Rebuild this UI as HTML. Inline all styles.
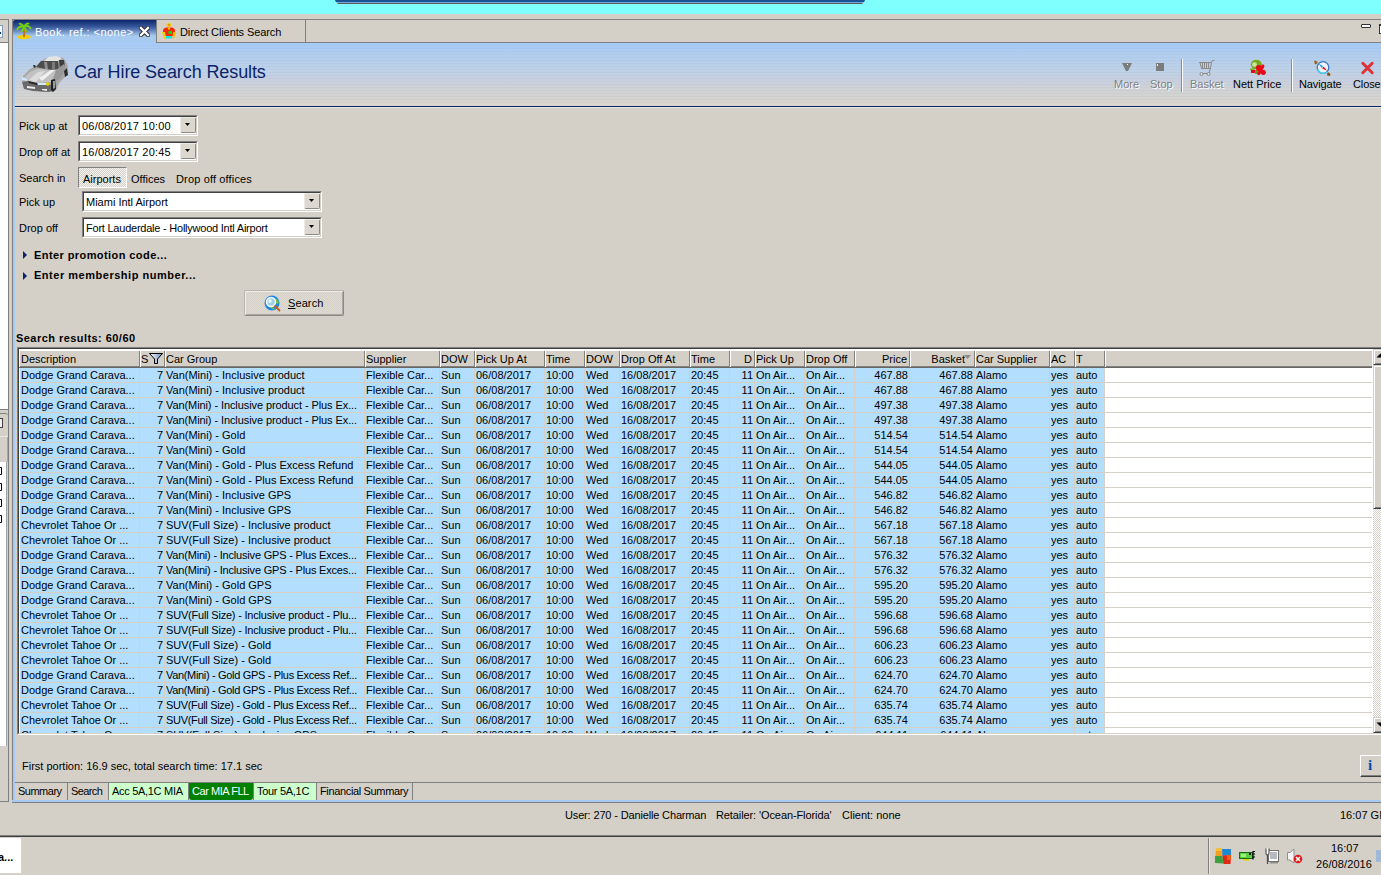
<!DOCTYPE html><html><head><meta charset="utf-8"><style>
html,body{margin:0;padding:0;}
body{width:1381px;height:875px;position:relative;overflow:hidden;background:#d4d0c8;font-family:"Liberation Sans", sans-serif;font-size:11px;color:#000;}
div{position:absolute;box-sizing:border-box;}
.t{white-space:nowrap;}
svg{position:absolute;}

</style></head><body>
<div style="left:0px;top:0px;width:1381px;height:14px;background:#80ffff"></div>
<svg style="left:333px;top:0px" width="534" height="5" viewBox="0 0 534 5"><polygon points="2,0 532,0 529,4 5,4" fill="#5a5a5a"/><polygon points="2,0 532,0 530,3 4,3" fill="#7aa6dc"/><polygon points="2,0 532,0 531,2 3,2" fill="#185496"/></svg>
<div style="left:0px;top:19px;width:9px;height:783px;background:#d4d0c8;border-top:1px solid #808080;border-right:1px solid #808080;border-bottom:1px solid #808080"></div>
<div style="left:0px;top:42px;width:8px;height:1px;background:#808080"></div>
<div style="left:0px;top:43px;width:8px;height:367px;background:#fff;border-bottom:1px solid #808080"></div>
<div style="left:0px;top:25px;width:3px;height:13px;background:#eef8ff;border:1px solid #8a9ab8;border-left:none"></div>
<div style="left:0px;top:32px;width:1px;height:2px;background:#00306a"></div>
<div style="left:0px;top:413px;width:8px;height:24px;background:#d4d0c8;border-top:1px solid #808080;border-bottom:1px solid #e8e6e2;border-top-right-radius:3px"></div>
<div style="left:0px;top:418px;width:3px;height:10px;background:#f0f0f0;border:1px solid #404040;border-left:none"></div>
<div style="left:0px;top:437px;width:8px;height:25px;background:#d4d0c8;border-right:1px solid #a8a6a0"></div>
<div style="left:0px;top:462px;width:7px;height:284px;background:#fff;border-right:1px solid #a0a0a0"></div>
<svg style="left:0px;top:467px" width="4" height="8" viewBox="0 0 4 8"><path d="M0 0.5 H1.5 V7.5 H0" stroke="#000" fill="none"/></svg>
<svg style="left:0px;top:483px" width="4" height="8" viewBox="0 0 4 8"><path d="M0 0.5 H1.5 V7.5 H0" stroke="#000" fill="none"/></svg>
<svg style="left:0px;top:499px" width="4" height="8" viewBox="0 0 4 8"><path d="M0 0.5 H1.5 V7.5 H0" stroke="#000" fill="none"/></svg>
<svg style="left:0px;top:515px" width="4" height="8" viewBox="0 0 4 8"><path d="M0 0.5 H1.5 V7.5 H0" stroke="#000" fill="none"/></svg>
<div style="left:12px;top:20px;width:1px;height:783px;background:#808080"></div>
<div style="left:13px;top:42px;width:2px;height:759px;background:#a6caf0"></div>
<div style="left:12px;top:800px;width:1369px;height:2px;background:#a6caf0"></div>
<div style="left:12px;top:802px;width:1369px;height:1px;background:#808080"></div>
<div style="left:12px;top:19px;width:1369px;height:1px;background:#808080"></div>
<div style="left:12px;top:42px;width:1369px;height:1px;background:#808080"></div>
<div style="left:13px;top:20px;width:143px;height:23px;background:linear-gradient(#0a246a 0px,#3a5a9c 7px,#a6caf0 16px,#a6caf0 23px);border-top-left-radius:2px"></div>
<svg style="left:16px;top:22px" width="16" height="18" viewBox="0 0 16 18"><ellipse cx="8" cy="15" rx="7" ry="2.2" fill="#f0d000"/><path d="M8 15 L8.5 6" stroke="#c87020" stroke-width="2"/><path d="M8 5 Q3 3 1 8 M8 5 Q12 2 15 7 M8 5 Q5 1 3 2 M8 5 Q11 0 13 2 M8 5 Q7 8 5 10 M8 5 Q10 8 11 10" stroke="#70d010" stroke-width="2" fill="none"/></svg>
<div class="t" style="left:35px;top:25px;height:14px;line-height:14px;color:#fff;letter-spacing:0.45px">Book. ref.: &lt;none&gt;</div>
<svg style="left:139px;top:26px" width="11" height="11" viewBox="0 0 11 11"><path d="M2 2 L9 9 M9 2 L2 9" stroke="#2a2a2a" stroke-width="4.4" stroke-linecap="square"/><path d="M2 2 L9 9 M9 2 L2 9" stroke="#fff" stroke-width="2.4" stroke-linecap="square"/></svg>
<div style="left:156px;top:20px;width:150px;height:22px;border-left:1px solid #808080;border-right:1px solid #808080;background:#d4d0c8"></div>
<svg style="left:158px;top:20px" width="22" height="22" viewBox="0 0 22 22"><path d="M5 11 Q5 7.5 9 7.5 L13 7.5 Q17 7.5 17 11 L17 16 L5 16 Z" fill="#f82800"/><ellipse cx="10.8" cy="5" rx="2.4" ry="2.1" fill="#f8c800"/><rect x="10" y="4.5" width="2" height="1" fill="#f06000"/><rect x="10" y="7.5" width="2" height="2" fill="#f8d000"/><path d="M4 12 L7 12 L8 18.5 L6 18.5 Z" fill="#f8d000"/><path d="M15 12 L18 12 L16 18.5 L14.5 18.5 Z" fill="#f8c000"/><rect x="10.5" y="11" width="3.5" height="3" fill="#10d810"/><rect x="8" y="16" width="6" height="2.5" fill="#08e8e8"/></svg>
<div class="t" style="left:180px;top:25px;height:14px;line-height:14px;letter-spacing:-0.1px">Direct Clients Search</div>
<div style="left:1361px;top:24px;width:10px;height:4px;border:1px solid #333;background:#fff;border-radius:1px"></div>
<div style="left:1379px;top:24px;width:9px;height:10px;border:1px solid #333;border-top-width:2px;background:#fff"></div>
<div style="left:15px;top:43px;width:1366px;height:63px;background:linear-gradient(#a6cbf7 0px,#b2cdef 12px,#bed2e8 27px,#c8d0e0 37px,#d0d2d4 47px,#d6d4d0 57px,#dcd8d2 63px)"></div>
<div style="left:15px;top:43px;width:1366px;height:63px;background:repeating-linear-gradient(rgba(255,255,255,0) 0px,rgba(255,255,255,0) 2px,rgba(0,0,0,0.025) 2px,rgba(0,0,0,0.025) 3px)"></div>
<div style="left:15px;top:106px;width:1366px;height:1px;background:#0a246a"></div>
<div style="left:15px;top:107px;width:1366px;height:1px;background:#e8e6e0"></div>
<svg style="left:18px;top:52px" width="54" height="44" viewBox="0 0 54 44"><polygon points="4,28 6,36 15,38 25,40 35,40 38,38 41,31 48,24 50,14 47,8 44,5 30,5 23,9 18,14 12,17 5,24" fill="#a8a8a8"/><polygon points="30,5 38,4 44,6 40,9 26,9" fill="#e4e4e4"/><polygon points="18,15 23,9 40,9 41,17 32,18" fill="#4c4c4c"/><polygon points="26,10 29,10 30,17 27,17" fill="#8e8e8e"/><polygon points="34,10 37,10 37,17 34,17" fill="#7a7a7a"/><polygon points="41,8 46,8 47,15 42,18" fill="#3e3e3e"/><polygon points="5,27 12,20 19,17 38,18 33,30 21,31 10,29" fill="#c2c2c2"/><polygon points="11,28 20,20 27,19 18,30" fill="#dcdcdc"/><polygon points="21,26 33,18 37,18 24,29" fill="#f0f0f0"/><polygon points="38,18 46,12 48,16 42,27 35,30" fill="#989898"/><polygon points="4,30 6,37 15,39 31,40 35,38 34,33 20,32 9,29" fill="#6a6a6a"/><polygon points="10,29 19,31 19,33 11,31" fill="#262626"/><polygon points="9,34 17,35 17,37 9,36" fill="#ececec"/><polygon points="24,37 29,37 29,39 24,38" fill="#f0f0f0"/><polygon points="20,31 28,31 28,33 20,33" fill="#d4ecff"/><circle cx="29.7" cy="32" r="1.7" fill="#e8d800"/><polygon points="4,25 9,27 9,29 4,28" fill="#d0e8ff"/><polygon points="33,28 37,27 38,37 35,40 33,38" fill="#222"/><polygon points="35,29 37,29 37,36 35,37" fill="#9a9a9a"/><polygon points="46,19 49,16 50,23 47,25" fill="#2a2a2a"/><polygon points="15,13 17,13 18,15 16,16" fill="#333"/></svg>
<div class="t" style="left:74px;top:62px;height:20px;line-height:20px;font-size:18px;color:#0a246a;letter-spacing:-0.1px">Car Hire Search Results</div>
<div class="t" style="left:1115px;top:78px;height:14px;line-height:14px;color:#fff">More</div>
<div class="t" style="left:1114px;top:77px;height:14px;line-height:14px;color:#808080">More</div>
<svg style="left:1121px;top:62px" width="12" height="11" viewBox="0 0 12 11"><polygon points="1,1 11,1 7,9 5,9" fill="#7c7c7c"/><rect x="6" y="2" width="1" height="1" fill="#fff"/></svg>
<div class="t" style="left:1151px;top:78px;height:14px;line-height:14px;color:#fff">Stop</div>
<div class="t" style="left:1150px;top:77px;height:14px;line-height:14px;color:#808080">Stop</div>
<svg style="left:1155px;top:62px" width="10" height="10" viewBox="0 0 10 10"><rect x="1" y="1" width="8" height="8" fill="#7c7c7c"/><rect x="2" y="2" width="1" height="2" fill="#fff"/></svg>
<div style="left:1181px;top:59px;width:1px;height:33px;background:#8c8c8c"></div>
<div style="left:1182px;top:59px;width:1px;height:33px;background:#fff"></div>
<div class="t" style="left:1191px;top:78px;height:14px;line-height:14px;color:#fff">Basket</div>
<div class="t" style="left:1190px;top:77px;height:14px;line-height:14px;color:#808080">Basket</div>
<svg style="left:1198px;top:59px" width="18" height="18" viewBox="0 0 18 18" fill="none" stroke="#8a8a8a" stroke-width="1"><path d="M1 3.5 L13.5 3.5 L14.5 1.5 L16.5 1.5"/><path d="M2 3.5 L3.5 9.5 L12.5 9.5 L13.5 3.5"/><path d="M4.5 4 V9 M6.5 4 V9 M8.5 4 V9 M10.5 4 V9"/><path d="M12.5 9.5 L11 14"/><path d="M4 14.5 H11"/><circle cx="3.5" cy="15" r="1.5" fill="#e6e2da"/><circle cx="10.5" cy="15" r="1.5" fill="#e6e2da"/></svg>
<div class="t" style="left:1233px;top:77px;height:14px;line-height:14px;letter-spacing:0px">Nett Price</div>
<svg style="left:1245px;top:56px" width="30" height="22" viewBox="0 0 30 22"><ellipse cx="11.3" cy="8.4" rx="5.5" ry="4.6" fill="#78a818"/><ellipse cx="9.5" cy="8.5" rx="2.5" ry="2.3" fill="#c8e4a8"/><path d="M5 13.5 Q8 13 10 12.5" stroke="#78a818" stroke-width="1.5" fill="none"/><rect x="10" y="14" width="3.5" height="4" fill="#68a020"/><rect x="6" y="14" width="4" height="3" fill="#e80818"/><circle cx="13.8" cy="12" r="2.9" fill="#e80818"/><circle cx="18.3" cy="16.3" r="2.6" fill="#e80818"/><circle cx="13.8" cy="17.6" r="1.6" fill="#e80818"/><circle cx="18" cy="10" r="1.4" fill="#e80818"/><path d="M18 10 L13.5 18" stroke="#e80818" stroke-width="3"/></svg>
<div style="left:1291px;top:59px;width:1px;height:33px;background:#8c8c8c"></div>
<div style="left:1292px;top:59px;width:1px;height:33px;background:#fff"></div>
<div class="t" style="left:1299px;top:77px;height:14px;line-height:14px;letter-spacing:-0.1px">Navigate</div>
<svg style="left:1308px;top:56px" width="30" height="24" viewBox="0 0 30 24"><circle cx="15" cy="11.5" r="5.8" fill="#eef2f6" stroke="#3a78c0" stroke-width="1.3"/><path d="M9.6 13 A5.8 5.8 0 0 0 19 16" stroke="#40d0f0" stroke-width="1.3" fill="none"/><polygon points="10.5,7.5 15,10.2 13.8,12" fill="#1890e8"/><polygon points="19,14.8 14.2,12.5 15.6,10.6" fill="#f01010"/><path d="M6.5 5 L9 7.5 M7 8 L9 5.5" stroke="#9a6020" stroke-width="1.8"/><path d="M19.5 17 L22 19.5 M19.5 19.5 L21.5 17" stroke="#8a5010" stroke-width="1.8"/></svg>
<div class="t" style="left:1353px;top:77px;height:14px;line-height:14px;letter-spacing:-0.1px">Close</div>
<svg style="left:1360px;top:61px" width="15" height="14" viewBox="0 0 15 14"><path d="M2.8 2.3 L12.2 11.7 M12.2 2.3 L2.8 11.7" stroke="#e03038" stroke-width="3" stroke-linecap="round"/></svg>
<div class="t" style="left:19px;top:119px;height:14px;line-height:14px;">Pick up at</div>
<div style="left:78px;top:115px;width:120px;height:21px;background:#fff;border-top:1px solid #808080;border-left:1px solid #808080;border-bottom:1px solid #fff;border-right:1px solid #fff"><div style="left:0;top:0;right:0;bottom:0;border-top:1px solid #404040;border-left:1px solid #404040;border-bottom:1px solid #d4d0c8;border-right:1px solid #d4d0c8"></div></div>
<div class="t" style="left:82px;top:119px;height:14px;line-height:14px;letter-spacing:0.2px">06/08/2017 10:00</div>
<div style="left:180px;top:117px;width:16px;height:16px;background:#dcd8d0;border:1px solid #9c9a94;border-radius:2px;border-top-color:#ece9e3;border-left-color:#ece9e3;border-right-color:#8c8a84;border-bottom-color:#8c8a84"></div>
<svg style="left:185px;top:123px" width="6" height="4" viewBox="0 0 6 4"><polygon points="0,0 5,0 2.5,3" fill="#000"/></svg>
<div class="t" style="left:19px;top:145px;height:14px;line-height:14px;">Drop off at</div>
<div style="left:78px;top:141px;width:120px;height:21px;background:#fff;border-top:1px solid #808080;border-left:1px solid #808080;border-bottom:1px solid #fff;border-right:1px solid #fff"><div style="left:0;top:0;right:0;bottom:0;border-top:1px solid #404040;border-left:1px solid #404040;border-bottom:1px solid #d4d0c8;border-right:1px solid #d4d0c8"></div></div>
<div class="t" style="left:82px;top:145px;height:14px;line-height:14px;letter-spacing:0.2px">16/08/2017 20:45</div>
<div style="left:180px;top:143px;width:16px;height:16px;background:#dcd8d0;border:1px solid #9c9a94;border-radius:2px;border-top-color:#ece9e3;border-left-color:#ece9e3;border-right-color:#8c8a84;border-bottom-color:#8c8a84"></div>
<svg style="left:185px;top:149px" width="6" height="4" viewBox="0 0 6 4"><polygon points="0,0 5,0 2.5,3" fill="#000"/></svg>
<div class="t" style="left:19px;top:171px;height:14px;line-height:14px;">Search in</div>
<div style="left:78px;top:167px;width:49px;height:21px;border-top:1px solid #808080;border-left:1px solid #808080;border-bottom:1px solid #fff;border-right:1px solid #fff;background-color:#e4e1dc;background-image:repeating-conic-gradient(#f4f3f0 0 25%, #d4d0c8 0 50%);background-size:2px 2px"></div>
<div class="t" style="left:83px;top:172px;height:14px;line-height:14px;">Airports</div>
<div class="t" style="left:131px;top:172px;height:14px;line-height:14px;">Offices</div>
<div class="t" style="left:176px;top:172px;height:14px;line-height:14px;letter-spacing:0.15px">Drop off offices</div>
<div class="t" style="left:19px;top:195px;height:14px;line-height:14px;">Pick up</div>
<div style="left:82px;top:191px;width:240px;height:21px;background:#fff;border-top:1px solid #808080;border-left:1px solid #808080;border-bottom:1px solid #fff;border-right:1px solid #fff"><div style="left:0;top:0;right:0;bottom:0;border-top:1px solid #404040;border-left:1px solid #404040;border-bottom:1px solid #d4d0c8;border-right:1px solid #d4d0c8"></div></div>
<div class="t" style="left:86px;top:195px;height:14px;line-height:14px;">Miami Intl Airport</div>
<div style="left:304px;top:193px;width:16px;height:16px;background:#dcd8d0;border:1px solid #9c9a94;border-radius:2px;border-top-color:#ece9e3;border-left-color:#ece9e3;border-right-color:#8c8a84;border-bottom-color:#8c8a84"></div>
<svg style="left:309px;top:199px" width="6" height="4" viewBox="0 0 6 4"><polygon points="0,0 5,0 2.5,3" fill="#000"/></svg>
<div class="t" style="left:19px;top:221px;height:14px;line-height:14px;">Drop off</div>
<div style="left:82px;top:217px;width:240px;height:21px;background:#fff;border-top:1px solid #808080;border-left:1px solid #808080;border-bottom:1px solid #fff;border-right:1px solid #fff"><div style="left:0;top:0;right:0;bottom:0;border-top:1px solid #404040;border-left:1px solid #404040;border-bottom:1px solid #d4d0c8;border-right:1px solid #d4d0c8"></div></div>
<div class="t" style="left:86px;top:221px;height:14px;line-height:14px;letter-spacing:-0.23px">Fort Lauderdale - Hollywood Intl Airport</div>
<div style="left:304px;top:219px;width:16px;height:16px;background:#dcd8d0;border:1px solid #9c9a94;border-radius:2px;border-top-color:#ece9e3;border-left-color:#ece9e3;border-right-color:#8c8a84;border-bottom-color:#8c8a84"></div>
<svg style="left:309px;top:225px" width="6" height="4" viewBox="0 0 6 4"><polygon points="0,0 5,0 2.5,3" fill="#000"/></svg>
<svg style="left:22px;top:250px" width="6" height="10" viewBox="0 0 6 10"><polygon points="1,1 5,5 1,9" fill="#0a246a"/></svg>
<div class="t" style="left:34px;top:248px;height:14px;line-height:14px;font-weight:bold;letter-spacing:0.42px">Enter promotion code...</div>
<svg style="left:22px;top:271px" width="6" height="10" viewBox="0 0 6 10"><polygon points="1,1 5,5 1,9" fill="#0a246a"/></svg>
<div class="t" style="left:34px;top:268px;height:14px;line-height:14px;font-weight:bold;letter-spacing:0.52px">Enter membership number...</div>
<div style="left:244px;top:290px;width:100px;height:26px;border:1px solid #8c8a84;border-top-color:#b8b6b0;border-left-color:#b8b6b0;border-radius:2px;background-color:#d8d4cc;background-image:repeating-conic-gradient(#e0dcd4 0 25%, #d4d0c8 0 50%);background-size:2px 2px;box-shadow:inset 1px 1px 0 #f0eee8, inset -1px -1px 0 #a8a6a0"></div>
<svg style="left:264px;top:295px" width="18" height="18" viewBox="0 0 18 18"><circle cx="8" cy="8" r="7.5" fill="#1e88e8"/><path d="M10 3 Q14 4 15 8 L12 9 Z" fill="#70c040"/><path d="M6 12 Q9 15 11 15 L9 12 Z" fill="#70c040"/><circle cx="7" cy="7" r="4.5" fill="#9fd0e8" stroke="#fff" stroke-width="1.5"/><circle cx="6" cy="6" r="1.8" fill="#e8f8ff"/><path d="M10.5 10.5 L16 16" stroke="#c06020" stroke-width="2"/></svg>
<div class="t" style="left:288px;top:296px;height:14px;line-height:14px;letter-spacing:0.1px"><u>S</u>earch</div>
<div class="t" style="left:16px;top:331px;height:14px;line-height:14px;font-weight:bold;letter-spacing:0.45px">Search results: 60/60</div>
<div style="left:17px;top:347px;width:1370px;height:388px;background:#fff;border-top:1px solid #808080;border-left:1px solid #808080;border-bottom:1px solid #fff"><div style="left:0;top:0;right:0;bottom:0;border-top:1px solid #404040;border-left:1px solid #404040;border-bottom:1px solid #d4d0c8"></div></div>
<div style="left:19px;top:349px;width:1353px;height:19px;background:#d4d0c8;border-top:2px solid #fff"></div>
<div style="left:19px;top:366px;width:1353px;height:1px;background:#808080"></div>
<div style="left:19px;top:367px;width:1353px;height:1px;background:#6a6762"></div>
<div style="left:19px;top:349px;width:1px;height:18px;background:#fff"></div>
<div style="left:139px;top:351px;width:1px;height:16px;background:#808080"></div>
<div style="left:140px;top:349px;width:1px;height:18px;background:#fff"></div>
<div style="left:164px;top:351px;width:1px;height:16px;background:#808080"></div>
<div style="left:165px;top:349px;width:1px;height:18px;background:#fff"></div>
<div style="left:364px;top:351px;width:1px;height:16px;background:#808080"></div>
<div style="left:365px;top:349px;width:1px;height:18px;background:#fff"></div>
<div style="left:439px;top:351px;width:1px;height:16px;background:#808080"></div>
<div style="left:440px;top:349px;width:1px;height:18px;background:#fff"></div>
<div style="left:474px;top:351px;width:1px;height:16px;background:#808080"></div>
<div style="left:475px;top:349px;width:1px;height:18px;background:#fff"></div>
<div style="left:544px;top:351px;width:1px;height:16px;background:#808080"></div>
<div style="left:545px;top:349px;width:1px;height:18px;background:#fff"></div>
<div style="left:584px;top:351px;width:1px;height:16px;background:#808080"></div>
<div style="left:585px;top:349px;width:1px;height:18px;background:#fff"></div>
<div style="left:619px;top:351px;width:1px;height:16px;background:#808080"></div>
<div style="left:620px;top:349px;width:1px;height:18px;background:#fff"></div>
<div style="left:689px;top:351px;width:1px;height:16px;background:#808080"></div>
<div style="left:690px;top:349px;width:1px;height:18px;background:#fff"></div>
<div style="left:729px;top:351px;width:1px;height:16px;background:#808080"></div>
<div style="left:730px;top:349px;width:1px;height:18px;background:#fff"></div>
<div style="left:754px;top:351px;width:1px;height:16px;background:#808080"></div>
<div style="left:755px;top:349px;width:1px;height:18px;background:#fff"></div>
<div style="left:804px;top:351px;width:1px;height:16px;background:#808080"></div>
<div style="left:805px;top:349px;width:1px;height:18px;background:#fff"></div>
<div style="left:854px;top:351px;width:1px;height:16px;background:#808080"></div>
<div style="left:855px;top:349px;width:1px;height:18px;background:#fff"></div>
<div style="left:909px;top:351px;width:1px;height:16px;background:#808080"></div>
<div style="left:910px;top:349px;width:1px;height:18px;background:#fff"></div>
<div style="left:974px;top:351px;width:1px;height:16px;background:#808080"></div>
<div style="left:975px;top:349px;width:1px;height:18px;background:#fff"></div>
<div style="left:1049px;top:351px;width:1px;height:16px;background:#808080"></div>
<div style="left:1050px;top:349px;width:1px;height:18px;background:#fff"></div>
<div style="left:1074px;top:351px;width:1px;height:16px;background:#808080"></div>
<div style="left:1075px;top:349px;width:1px;height:18px;background:#fff"></div>
<div style="left:1104px;top:351px;width:1px;height:16px;background:#808080"></div>
<div style="left:1105px;top:349px;width:1px;height:18px;background:#fff"></div>
<div class="t" style="left:21px;top:352px;height:14px;line-height:14px;">Description</div>
<div class="t" style="left:141px;top:352px;height:14px;line-height:14px;">S</div>
<div class="t" style="left:166px;top:352px;height:14px;line-height:14px;">Car Group</div>
<div class="t" style="left:366px;top:352px;height:14px;line-height:14px;">Supplier</div>
<div class="t" style="left:441px;top:352px;height:14px;line-height:14px;">DOW</div>
<div class="t" style="left:476px;top:352px;height:14px;line-height:14px;">Pick Up At</div>
<div class="t" style="left:546px;top:352px;height:14px;line-height:14px;">Time</div>
<div class="t" style="left:586px;top:352px;height:14px;line-height:14px;">DOW</div>
<div class="t" style="left:621px;top:352px;height:14px;line-height:14px;">Drop Off At</div>
<div class="t" style="left:691px;top:352px;height:14px;line-height:14px;">Time</div>
<div class="t" style="left:730px;top:352px;width:22px;height:14px;line-height:14px;text-align:right">D</div>
<div class="t" style="left:756px;top:352px;height:14px;line-height:14px;">Pick Up</div>
<div class="t" style="left:806px;top:352px;height:14px;line-height:14px;">Drop Off</div>
<div class="t" style="left:855px;top:352px;width:52px;height:14px;line-height:14px;text-align:right">Price</div>
<div class="t" style="left:910px;top:352px;width:55px;height:14px;line-height:14px;text-align:right">Basket</div>
<div class="t" style="left:976px;top:352px;height:14px;line-height:14px;">Car Supplier</div>
<div class="t" style="left:1051px;top:352px;height:14px;line-height:14px;">AC</div>
<div class="t" style="left:1076px;top:352px;height:14px;line-height:14px;">T</div>
<svg style="left:149px;top:353px" width="14" height="11" viewBox="0 0 14 11"><defs><linearGradient id="fg" x1="0" x2="1"><stop offset="0" stop-color="#fff"/><stop offset="1" stop-color="#6a8ac0"/></linearGradient></defs><polygon points="0.5,0.5 13.5,0.5 8.5,6 8.5,10.5 5.5,10.5 5.5,6" fill="url(#fg)" stroke="#000" stroke-width="1"/></svg>
<svg style="left:964px;top:355px" width="8" height="5" viewBox="0 0 8 5"><polygon points="0,0 7,0 3.5,4" fill="#8a8a8a"/></svg>
<div style="left:19px;top:368px;width:1354px;height:365px;overflow:hidden">
<div style="left:0;top:0px;width:1085px;height:14px;background:#b4defe"></div>
<div style="left:0;top:14px;width:1354px;height:1px;background:#d4d0c8"></div>
<div class="t" style="left:2px;top:0px;width:117px;overflow:hidden;height:14px;line-height:14px;letter-spacing:0px">Dodge Grand Carava...</div>
<div class="t" style="left:121px;top:0px;width:23px;height:14px;line-height:14px;text-align:right">7</div>
<div class="t" style="left:147px;top:0px;width:197px;overflow:hidden;height:14px;line-height:14px;letter-spacing:0px">Van(Mini) - Inclusive product</div>
<div class="t" style="left:347px;top:0px;width:72px;overflow:hidden;height:14px;line-height:14px;letter-spacing:0px">Flexible Car...</div>
<div class="t" style="left:422px;top:0px;width:32px;overflow:hidden;height:14px;line-height:14px;letter-spacing:0px">Sun</div>
<div class="t" style="left:457px;top:0px;width:67px;overflow:hidden;height:14px;line-height:14px;letter-spacing:0px">06/08/2017</div>
<div class="t" style="left:527px;top:0px;width:37px;overflow:hidden;height:14px;line-height:14px;letter-spacing:0px">10:00</div>
<div class="t" style="left:567px;top:0px;width:32px;overflow:hidden;height:14px;line-height:14px;letter-spacing:0px">Wed</div>
<div class="t" style="left:602px;top:0px;width:67px;overflow:hidden;height:14px;line-height:14px;letter-spacing:0px">16/08/2017</div>
<div class="t" style="left:672px;top:0px;width:37px;overflow:hidden;height:14px;line-height:14px;letter-spacing:0px">20:45</div>
<div class="t" style="left:711px;top:0px;width:23px;height:14px;line-height:14px;text-align:right">11</div>
<div class="t" style="left:737px;top:0px;width:47px;overflow:hidden;height:14px;line-height:14px;letter-spacing:0px">On Air...</div>
<div class="t" style="left:787px;top:0px;width:47px;overflow:hidden;height:14px;line-height:14px;letter-spacing:0px">On Air...</div>
<div class="t" style="left:836px;top:0px;width:53px;height:14px;line-height:14px;text-align:right">467.88</div>
<div class="t" style="left:891px;top:0px;width:63px;height:14px;line-height:14px;text-align:right">467.88</div>
<div class="t" style="left:957px;top:0px;width:72px;overflow:hidden;height:14px;line-height:14px;letter-spacing:0px">Alamo</div>
<div class="t" style="left:1032px;top:0px;width:22px;overflow:hidden;height:14px;line-height:14px;letter-spacing:0px">yes</div>
<div class="t" style="left:1057px;top:0px;width:27px;overflow:hidden;height:14px;line-height:14px;letter-spacing:0px">auto</div>
<div style="left:0;top:15px;width:1085px;height:14px;background:#b4defe"></div>
<div style="left:0;top:29px;width:1354px;height:1px;background:#d4d0c8"></div>
<div class="t" style="left:2px;top:15px;width:117px;overflow:hidden;height:14px;line-height:14px;letter-spacing:0px">Dodge Grand Carava...</div>
<div class="t" style="left:121px;top:15px;width:23px;height:14px;line-height:14px;text-align:right">7</div>
<div class="t" style="left:147px;top:15px;width:197px;overflow:hidden;height:14px;line-height:14px;letter-spacing:0px">Van(Mini) - Inclusive product</div>
<div class="t" style="left:347px;top:15px;width:72px;overflow:hidden;height:14px;line-height:14px;letter-spacing:0px">Flexible Car...</div>
<div class="t" style="left:422px;top:15px;width:32px;overflow:hidden;height:14px;line-height:14px;letter-spacing:0px">Sun</div>
<div class="t" style="left:457px;top:15px;width:67px;overflow:hidden;height:14px;line-height:14px;letter-spacing:0px">06/08/2017</div>
<div class="t" style="left:527px;top:15px;width:37px;overflow:hidden;height:14px;line-height:14px;letter-spacing:0px">10:00</div>
<div class="t" style="left:567px;top:15px;width:32px;overflow:hidden;height:14px;line-height:14px;letter-spacing:0px">Wed</div>
<div class="t" style="left:602px;top:15px;width:67px;overflow:hidden;height:14px;line-height:14px;letter-spacing:0px">16/08/2017</div>
<div class="t" style="left:672px;top:15px;width:37px;overflow:hidden;height:14px;line-height:14px;letter-spacing:0px">20:45</div>
<div class="t" style="left:711px;top:15px;width:23px;height:14px;line-height:14px;text-align:right">11</div>
<div class="t" style="left:737px;top:15px;width:47px;overflow:hidden;height:14px;line-height:14px;letter-spacing:0px">On Air...</div>
<div class="t" style="left:787px;top:15px;width:47px;overflow:hidden;height:14px;line-height:14px;letter-spacing:0px">On Air...</div>
<div class="t" style="left:836px;top:15px;width:53px;height:14px;line-height:14px;text-align:right">467.88</div>
<div class="t" style="left:891px;top:15px;width:63px;height:14px;line-height:14px;text-align:right">467.88</div>
<div class="t" style="left:957px;top:15px;width:72px;overflow:hidden;height:14px;line-height:14px;letter-spacing:0px">Alamo</div>
<div class="t" style="left:1032px;top:15px;width:22px;overflow:hidden;height:14px;line-height:14px;letter-spacing:0px">yes</div>
<div class="t" style="left:1057px;top:15px;width:27px;overflow:hidden;height:14px;line-height:14px;letter-spacing:0px">auto</div>
<div style="left:0;top:30px;width:1085px;height:14px;background:#b4defe"></div>
<div style="left:0;top:44px;width:1354px;height:1px;background:#d4d0c8"></div>
<div class="t" style="left:2px;top:30px;width:117px;overflow:hidden;height:14px;line-height:14px;letter-spacing:0px">Dodge Grand Carava...</div>
<div class="t" style="left:121px;top:30px;width:23px;height:14px;line-height:14px;text-align:right">7</div>
<div class="t" style="left:147px;top:30px;width:197px;overflow:hidden;height:14px;line-height:14px;letter-spacing:-0.09px">Van(Mini) - Inclusive product - Plus Ex...</div>
<div class="t" style="left:347px;top:30px;width:72px;overflow:hidden;height:14px;line-height:14px;letter-spacing:0px">Flexible Car...</div>
<div class="t" style="left:422px;top:30px;width:32px;overflow:hidden;height:14px;line-height:14px;letter-spacing:0px">Sun</div>
<div class="t" style="left:457px;top:30px;width:67px;overflow:hidden;height:14px;line-height:14px;letter-spacing:0px">06/08/2017</div>
<div class="t" style="left:527px;top:30px;width:37px;overflow:hidden;height:14px;line-height:14px;letter-spacing:0px">10:00</div>
<div class="t" style="left:567px;top:30px;width:32px;overflow:hidden;height:14px;line-height:14px;letter-spacing:0px">Wed</div>
<div class="t" style="left:602px;top:30px;width:67px;overflow:hidden;height:14px;line-height:14px;letter-spacing:0px">16/08/2017</div>
<div class="t" style="left:672px;top:30px;width:37px;overflow:hidden;height:14px;line-height:14px;letter-spacing:0px">20:45</div>
<div class="t" style="left:711px;top:30px;width:23px;height:14px;line-height:14px;text-align:right">11</div>
<div class="t" style="left:737px;top:30px;width:47px;overflow:hidden;height:14px;line-height:14px;letter-spacing:0px">On Air...</div>
<div class="t" style="left:787px;top:30px;width:47px;overflow:hidden;height:14px;line-height:14px;letter-spacing:0px">On Air...</div>
<div class="t" style="left:836px;top:30px;width:53px;height:14px;line-height:14px;text-align:right">497.38</div>
<div class="t" style="left:891px;top:30px;width:63px;height:14px;line-height:14px;text-align:right">497.38</div>
<div class="t" style="left:957px;top:30px;width:72px;overflow:hidden;height:14px;line-height:14px;letter-spacing:0px">Alamo</div>
<div class="t" style="left:1032px;top:30px;width:22px;overflow:hidden;height:14px;line-height:14px;letter-spacing:0px">yes</div>
<div class="t" style="left:1057px;top:30px;width:27px;overflow:hidden;height:14px;line-height:14px;letter-spacing:0px">auto</div>
<div style="left:0;top:45px;width:1085px;height:14px;background:#b4defe"></div>
<div style="left:0;top:59px;width:1354px;height:1px;background:#d4d0c8"></div>
<div class="t" style="left:2px;top:45px;width:117px;overflow:hidden;height:14px;line-height:14px;letter-spacing:0px">Dodge Grand Carava...</div>
<div class="t" style="left:121px;top:45px;width:23px;height:14px;line-height:14px;text-align:right">7</div>
<div class="t" style="left:147px;top:45px;width:197px;overflow:hidden;height:14px;line-height:14px;letter-spacing:-0.09px">Van(Mini) - Inclusive product - Plus Ex...</div>
<div class="t" style="left:347px;top:45px;width:72px;overflow:hidden;height:14px;line-height:14px;letter-spacing:0px">Flexible Car...</div>
<div class="t" style="left:422px;top:45px;width:32px;overflow:hidden;height:14px;line-height:14px;letter-spacing:0px">Sun</div>
<div class="t" style="left:457px;top:45px;width:67px;overflow:hidden;height:14px;line-height:14px;letter-spacing:0px">06/08/2017</div>
<div class="t" style="left:527px;top:45px;width:37px;overflow:hidden;height:14px;line-height:14px;letter-spacing:0px">10:00</div>
<div class="t" style="left:567px;top:45px;width:32px;overflow:hidden;height:14px;line-height:14px;letter-spacing:0px">Wed</div>
<div class="t" style="left:602px;top:45px;width:67px;overflow:hidden;height:14px;line-height:14px;letter-spacing:0px">16/08/2017</div>
<div class="t" style="left:672px;top:45px;width:37px;overflow:hidden;height:14px;line-height:14px;letter-spacing:0px">20:45</div>
<div class="t" style="left:711px;top:45px;width:23px;height:14px;line-height:14px;text-align:right">11</div>
<div class="t" style="left:737px;top:45px;width:47px;overflow:hidden;height:14px;line-height:14px;letter-spacing:0px">On Air...</div>
<div class="t" style="left:787px;top:45px;width:47px;overflow:hidden;height:14px;line-height:14px;letter-spacing:0px">On Air...</div>
<div class="t" style="left:836px;top:45px;width:53px;height:14px;line-height:14px;text-align:right">497.38</div>
<div class="t" style="left:891px;top:45px;width:63px;height:14px;line-height:14px;text-align:right">497.38</div>
<div class="t" style="left:957px;top:45px;width:72px;overflow:hidden;height:14px;line-height:14px;letter-spacing:0px">Alamo</div>
<div class="t" style="left:1032px;top:45px;width:22px;overflow:hidden;height:14px;line-height:14px;letter-spacing:0px">yes</div>
<div class="t" style="left:1057px;top:45px;width:27px;overflow:hidden;height:14px;line-height:14px;letter-spacing:0px">auto</div>
<div style="left:0;top:60px;width:1085px;height:14px;background:#b4defe"></div>
<div style="left:0;top:74px;width:1354px;height:1px;background:#d4d0c8"></div>
<div class="t" style="left:2px;top:60px;width:117px;overflow:hidden;height:14px;line-height:14px;letter-spacing:0px">Dodge Grand Carava...</div>
<div class="t" style="left:121px;top:60px;width:23px;height:14px;line-height:14px;text-align:right">7</div>
<div class="t" style="left:147px;top:60px;width:197px;overflow:hidden;height:14px;line-height:14px;letter-spacing:0px">Van(Mini) - Gold</div>
<div class="t" style="left:347px;top:60px;width:72px;overflow:hidden;height:14px;line-height:14px;letter-spacing:0px">Flexible Car...</div>
<div class="t" style="left:422px;top:60px;width:32px;overflow:hidden;height:14px;line-height:14px;letter-spacing:0px">Sun</div>
<div class="t" style="left:457px;top:60px;width:67px;overflow:hidden;height:14px;line-height:14px;letter-spacing:0px">06/08/2017</div>
<div class="t" style="left:527px;top:60px;width:37px;overflow:hidden;height:14px;line-height:14px;letter-spacing:0px">10:00</div>
<div class="t" style="left:567px;top:60px;width:32px;overflow:hidden;height:14px;line-height:14px;letter-spacing:0px">Wed</div>
<div class="t" style="left:602px;top:60px;width:67px;overflow:hidden;height:14px;line-height:14px;letter-spacing:0px">16/08/2017</div>
<div class="t" style="left:672px;top:60px;width:37px;overflow:hidden;height:14px;line-height:14px;letter-spacing:0px">20:45</div>
<div class="t" style="left:711px;top:60px;width:23px;height:14px;line-height:14px;text-align:right">11</div>
<div class="t" style="left:737px;top:60px;width:47px;overflow:hidden;height:14px;line-height:14px;letter-spacing:0px">On Air...</div>
<div class="t" style="left:787px;top:60px;width:47px;overflow:hidden;height:14px;line-height:14px;letter-spacing:0px">On Air...</div>
<div class="t" style="left:836px;top:60px;width:53px;height:14px;line-height:14px;text-align:right">514.54</div>
<div class="t" style="left:891px;top:60px;width:63px;height:14px;line-height:14px;text-align:right">514.54</div>
<div class="t" style="left:957px;top:60px;width:72px;overflow:hidden;height:14px;line-height:14px;letter-spacing:0px">Alamo</div>
<div class="t" style="left:1032px;top:60px;width:22px;overflow:hidden;height:14px;line-height:14px;letter-spacing:0px">yes</div>
<div class="t" style="left:1057px;top:60px;width:27px;overflow:hidden;height:14px;line-height:14px;letter-spacing:0px">auto</div>
<div style="left:0;top:75px;width:1085px;height:14px;background:#b4defe"></div>
<div style="left:0;top:89px;width:1354px;height:1px;background:#d4d0c8"></div>
<div class="t" style="left:2px;top:75px;width:117px;overflow:hidden;height:14px;line-height:14px;letter-spacing:0px">Dodge Grand Carava...</div>
<div class="t" style="left:121px;top:75px;width:23px;height:14px;line-height:14px;text-align:right">7</div>
<div class="t" style="left:147px;top:75px;width:197px;overflow:hidden;height:14px;line-height:14px;letter-spacing:0px">Van(Mini) - Gold</div>
<div class="t" style="left:347px;top:75px;width:72px;overflow:hidden;height:14px;line-height:14px;letter-spacing:0px">Flexible Car...</div>
<div class="t" style="left:422px;top:75px;width:32px;overflow:hidden;height:14px;line-height:14px;letter-spacing:0px">Sun</div>
<div class="t" style="left:457px;top:75px;width:67px;overflow:hidden;height:14px;line-height:14px;letter-spacing:0px">06/08/2017</div>
<div class="t" style="left:527px;top:75px;width:37px;overflow:hidden;height:14px;line-height:14px;letter-spacing:0px">10:00</div>
<div class="t" style="left:567px;top:75px;width:32px;overflow:hidden;height:14px;line-height:14px;letter-spacing:0px">Wed</div>
<div class="t" style="left:602px;top:75px;width:67px;overflow:hidden;height:14px;line-height:14px;letter-spacing:0px">16/08/2017</div>
<div class="t" style="left:672px;top:75px;width:37px;overflow:hidden;height:14px;line-height:14px;letter-spacing:0px">20:45</div>
<div class="t" style="left:711px;top:75px;width:23px;height:14px;line-height:14px;text-align:right">11</div>
<div class="t" style="left:737px;top:75px;width:47px;overflow:hidden;height:14px;line-height:14px;letter-spacing:0px">On Air...</div>
<div class="t" style="left:787px;top:75px;width:47px;overflow:hidden;height:14px;line-height:14px;letter-spacing:0px">On Air...</div>
<div class="t" style="left:836px;top:75px;width:53px;height:14px;line-height:14px;text-align:right">514.54</div>
<div class="t" style="left:891px;top:75px;width:63px;height:14px;line-height:14px;text-align:right">514.54</div>
<div class="t" style="left:957px;top:75px;width:72px;overflow:hidden;height:14px;line-height:14px;letter-spacing:0px">Alamo</div>
<div class="t" style="left:1032px;top:75px;width:22px;overflow:hidden;height:14px;line-height:14px;letter-spacing:0px">yes</div>
<div class="t" style="left:1057px;top:75px;width:27px;overflow:hidden;height:14px;line-height:14px;letter-spacing:0px">auto</div>
<div style="left:0;top:90px;width:1085px;height:14px;background:#b4defe"></div>
<div style="left:0;top:104px;width:1354px;height:1px;background:#d4d0c8"></div>
<div class="t" style="left:2px;top:90px;width:117px;overflow:hidden;height:14px;line-height:14px;letter-spacing:0px">Dodge Grand Carava...</div>
<div class="t" style="left:121px;top:90px;width:23px;height:14px;line-height:14px;text-align:right">7</div>
<div class="t" style="left:147px;top:90px;width:197px;overflow:hidden;height:14px;line-height:14px;letter-spacing:0px">Van(Mini) - Gold - Plus Excess Refund</div>
<div class="t" style="left:347px;top:90px;width:72px;overflow:hidden;height:14px;line-height:14px;letter-spacing:0px">Flexible Car...</div>
<div class="t" style="left:422px;top:90px;width:32px;overflow:hidden;height:14px;line-height:14px;letter-spacing:0px">Sun</div>
<div class="t" style="left:457px;top:90px;width:67px;overflow:hidden;height:14px;line-height:14px;letter-spacing:0px">06/08/2017</div>
<div class="t" style="left:527px;top:90px;width:37px;overflow:hidden;height:14px;line-height:14px;letter-spacing:0px">10:00</div>
<div class="t" style="left:567px;top:90px;width:32px;overflow:hidden;height:14px;line-height:14px;letter-spacing:0px">Wed</div>
<div class="t" style="left:602px;top:90px;width:67px;overflow:hidden;height:14px;line-height:14px;letter-spacing:0px">16/08/2017</div>
<div class="t" style="left:672px;top:90px;width:37px;overflow:hidden;height:14px;line-height:14px;letter-spacing:0px">20:45</div>
<div class="t" style="left:711px;top:90px;width:23px;height:14px;line-height:14px;text-align:right">11</div>
<div class="t" style="left:737px;top:90px;width:47px;overflow:hidden;height:14px;line-height:14px;letter-spacing:0px">On Air...</div>
<div class="t" style="left:787px;top:90px;width:47px;overflow:hidden;height:14px;line-height:14px;letter-spacing:0px">On Air...</div>
<div class="t" style="left:836px;top:90px;width:53px;height:14px;line-height:14px;text-align:right">544.05</div>
<div class="t" style="left:891px;top:90px;width:63px;height:14px;line-height:14px;text-align:right">544.05</div>
<div class="t" style="left:957px;top:90px;width:72px;overflow:hidden;height:14px;line-height:14px;letter-spacing:0px">Alamo</div>
<div class="t" style="left:1032px;top:90px;width:22px;overflow:hidden;height:14px;line-height:14px;letter-spacing:0px">yes</div>
<div class="t" style="left:1057px;top:90px;width:27px;overflow:hidden;height:14px;line-height:14px;letter-spacing:0px">auto</div>
<div style="left:0;top:105px;width:1085px;height:14px;background:#b4defe"></div>
<div style="left:0;top:119px;width:1354px;height:1px;background:#d4d0c8"></div>
<div class="t" style="left:2px;top:105px;width:117px;overflow:hidden;height:14px;line-height:14px;letter-spacing:0px">Dodge Grand Carava...</div>
<div class="t" style="left:121px;top:105px;width:23px;height:14px;line-height:14px;text-align:right">7</div>
<div class="t" style="left:147px;top:105px;width:197px;overflow:hidden;height:14px;line-height:14px;letter-spacing:0px">Van(Mini) - Gold - Plus Excess Refund</div>
<div class="t" style="left:347px;top:105px;width:72px;overflow:hidden;height:14px;line-height:14px;letter-spacing:0px">Flexible Car...</div>
<div class="t" style="left:422px;top:105px;width:32px;overflow:hidden;height:14px;line-height:14px;letter-spacing:0px">Sun</div>
<div class="t" style="left:457px;top:105px;width:67px;overflow:hidden;height:14px;line-height:14px;letter-spacing:0px">06/08/2017</div>
<div class="t" style="left:527px;top:105px;width:37px;overflow:hidden;height:14px;line-height:14px;letter-spacing:0px">10:00</div>
<div class="t" style="left:567px;top:105px;width:32px;overflow:hidden;height:14px;line-height:14px;letter-spacing:0px">Wed</div>
<div class="t" style="left:602px;top:105px;width:67px;overflow:hidden;height:14px;line-height:14px;letter-spacing:0px">16/08/2017</div>
<div class="t" style="left:672px;top:105px;width:37px;overflow:hidden;height:14px;line-height:14px;letter-spacing:0px">20:45</div>
<div class="t" style="left:711px;top:105px;width:23px;height:14px;line-height:14px;text-align:right">11</div>
<div class="t" style="left:737px;top:105px;width:47px;overflow:hidden;height:14px;line-height:14px;letter-spacing:0px">On Air...</div>
<div class="t" style="left:787px;top:105px;width:47px;overflow:hidden;height:14px;line-height:14px;letter-spacing:0px">On Air...</div>
<div class="t" style="left:836px;top:105px;width:53px;height:14px;line-height:14px;text-align:right">544.05</div>
<div class="t" style="left:891px;top:105px;width:63px;height:14px;line-height:14px;text-align:right">544.05</div>
<div class="t" style="left:957px;top:105px;width:72px;overflow:hidden;height:14px;line-height:14px;letter-spacing:0px">Alamo</div>
<div class="t" style="left:1032px;top:105px;width:22px;overflow:hidden;height:14px;line-height:14px;letter-spacing:0px">yes</div>
<div class="t" style="left:1057px;top:105px;width:27px;overflow:hidden;height:14px;line-height:14px;letter-spacing:0px">auto</div>
<div style="left:0;top:120px;width:1085px;height:14px;background:#b4defe"></div>
<div style="left:0;top:134px;width:1354px;height:1px;background:#d4d0c8"></div>
<div class="t" style="left:2px;top:120px;width:117px;overflow:hidden;height:14px;line-height:14px;letter-spacing:0px">Dodge Grand Carava...</div>
<div class="t" style="left:121px;top:120px;width:23px;height:14px;line-height:14px;text-align:right">7</div>
<div class="t" style="left:147px;top:120px;width:197px;overflow:hidden;height:14px;line-height:14px;letter-spacing:0px">Van(Mini) - Inclusive GPS</div>
<div class="t" style="left:347px;top:120px;width:72px;overflow:hidden;height:14px;line-height:14px;letter-spacing:0px">Flexible Car...</div>
<div class="t" style="left:422px;top:120px;width:32px;overflow:hidden;height:14px;line-height:14px;letter-spacing:0px">Sun</div>
<div class="t" style="left:457px;top:120px;width:67px;overflow:hidden;height:14px;line-height:14px;letter-spacing:0px">06/08/2017</div>
<div class="t" style="left:527px;top:120px;width:37px;overflow:hidden;height:14px;line-height:14px;letter-spacing:0px">10:00</div>
<div class="t" style="left:567px;top:120px;width:32px;overflow:hidden;height:14px;line-height:14px;letter-spacing:0px">Wed</div>
<div class="t" style="left:602px;top:120px;width:67px;overflow:hidden;height:14px;line-height:14px;letter-spacing:0px">16/08/2017</div>
<div class="t" style="left:672px;top:120px;width:37px;overflow:hidden;height:14px;line-height:14px;letter-spacing:0px">20:45</div>
<div class="t" style="left:711px;top:120px;width:23px;height:14px;line-height:14px;text-align:right">11</div>
<div class="t" style="left:737px;top:120px;width:47px;overflow:hidden;height:14px;line-height:14px;letter-spacing:0px">On Air...</div>
<div class="t" style="left:787px;top:120px;width:47px;overflow:hidden;height:14px;line-height:14px;letter-spacing:0px">On Air...</div>
<div class="t" style="left:836px;top:120px;width:53px;height:14px;line-height:14px;text-align:right">546.82</div>
<div class="t" style="left:891px;top:120px;width:63px;height:14px;line-height:14px;text-align:right">546.82</div>
<div class="t" style="left:957px;top:120px;width:72px;overflow:hidden;height:14px;line-height:14px;letter-spacing:0px">Alamo</div>
<div class="t" style="left:1032px;top:120px;width:22px;overflow:hidden;height:14px;line-height:14px;letter-spacing:0px">yes</div>
<div class="t" style="left:1057px;top:120px;width:27px;overflow:hidden;height:14px;line-height:14px;letter-spacing:0px">auto</div>
<div style="left:0;top:135px;width:1085px;height:14px;background:#b4defe"></div>
<div style="left:0;top:149px;width:1354px;height:1px;background:#d4d0c8"></div>
<div class="t" style="left:2px;top:135px;width:117px;overflow:hidden;height:14px;line-height:14px;letter-spacing:0px">Dodge Grand Carava...</div>
<div class="t" style="left:121px;top:135px;width:23px;height:14px;line-height:14px;text-align:right">7</div>
<div class="t" style="left:147px;top:135px;width:197px;overflow:hidden;height:14px;line-height:14px;letter-spacing:0px">Van(Mini) - Inclusive GPS</div>
<div class="t" style="left:347px;top:135px;width:72px;overflow:hidden;height:14px;line-height:14px;letter-spacing:0px">Flexible Car...</div>
<div class="t" style="left:422px;top:135px;width:32px;overflow:hidden;height:14px;line-height:14px;letter-spacing:0px">Sun</div>
<div class="t" style="left:457px;top:135px;width:67px;overflow:hidden;height:14px;line-height:14px;letter-spacing:0px">06/08/2017</div>
<div class="t" style="left:527px;top:135px;width:37px;overflow:hidden;height:14px;line-height:14px;letter-spacing:0px">10:00</div>
<div class="t" style="left:567px;top:135px;width:32px;overflow:hidden;height:14px;line-height:14px;letter-spacing:0px">Wed</div>
<div class="t" style="left:602px;top:135px;width:67px;overflow:hidden;height:14px;line-height:14px;letter-spacing:0px">16/08/2017</div>
<div class="t" style="left:672px;top:135px;width:37px;overflow:hidden;height:14px;line-height:14px;letter-spacing:0px">20:45</div>
<div class="t" style="left:711px;top:135px;width:23px;height:14px;line-height:14px;text-align:right">11</div>
<div class="t" style="left:737px;top:135px;width:47px;overflow:hidden;height:14px;line-height:14px;letter-spacing:0px">On Air...</div>
<div class="t" style="left:787px;top:135px;width:47px;overflow:hidden;height:14px;line-height:14px;letter-spacing:0px">On Air...</div>
<div class="t" style="left:836px;top:135px;width:53px;height:14px;line-height:14px;text-align:right">546.82</div>
<div class="t" style="left:891px;top:135px;width:63px;height:14px;line-height:14px;text-align:right">546.82</div>
<div class="t" style="left:957px;top:135px;width:72px;overflow:hidden;height:14px;line-height:14px;letter-spacing:0px">Alamo</div>
<div class="t" style="left:1032px;top:135px;width:22px;overflow:hidden;height:14px;line-height:14px;letter-spacing:0px">yes</div>
<div class="t" style="left:1057px;top:135px;width:27px;overflow:hidden;height:14px;line-height:14px;letter-spacing:0px">auto</div>
<div style="left:0;top:150px;width:1085px;height:14px;background:#b4defe"></div>
<div style="left:0;top:164px;width:1354px;height:1px;background:#d4d0c8"></div>
<div class="t" style="left:2px;top:150px;width:117px;overflow:hidden;height:14px;line-height:14px;letter-spacing:0px">Chevrolet Tahoe Or ...</div>
<div class="t" style="left:121px;top:150px;width:23px;height:14px;line-height:14px;text-align:right">7</div>
<div class="t" style="left:147px;top:150px;width:197px;overflow:hidden;height:14px;line-height:14px;letter-spacing:0px">SUV(Full Size) - Inclusive product</div>
<div class="t" style="left:347px;top:150px;width:72px;overflow:hidden;height:14px;line-height:14px;letter-spacing:0px">Flexible Car...</div>
<div class="t" style="left:422px;top:150px;width:32px;overflow:hidden;height:14px;line-height:14px;letter-spacing:0px">Sun</div>
<div class="t" style="left:457px;top:150px;width:67px;overflow:hidden;height:14px;line-height:14px;letter-spacing:0px">06/08/2017</div>
<div class="t" style="left:527px;top:150px;width:37px;overflow:hidden;height:14px;line-height:14px;letter-spacing:0px">10:00</div>
<div class="t" style="left:567px;top:150px;width:32px;overflow:hidden;height:14px;line-height:14px;letter-spacing:0px">Wed</div>
<div class="t" style="left:602px;top:150px;width:67px;overflow:hidden;height:14px;line-height:14px;letter-spacing:0px">16/08/2017</div>
<div class="t" style="left:672px;top:150px;width:37px;overflow:hidden;height:14px;line-height:14px;letter-spacing:0px">20:45</div>
<div class="t" style="left:711px;top:150px;width:23px;height:14px;line-height:14px;text-align:right">11</div>
<div class="t" style="left:737px;top:150px;width:47px;overflow:hidden;height:14px;line-height:14px;letter-spacing:0px">On Air...</div>
<div class="t" style="left:787px;top:150px;width:47px;overflow:hidden;height:14px;line-height:14px;letter-spacing:0px">On Air...</div>
<div class="t" style="left:836px;top:150px;width:53px;height:14px;line-height:14px;text-align:right">567.18</div>
<div class="t" style="left:891px;top:150px;width:63px;height:14px;line-height:14px;text-align:right">567.18</div>
<div class="t" style="left:957px;top:150px;width:72px;overflow:hidden;height:14px;line-height:14px;letter-spacing:0px">Alamo</div>
<div class="t" style="left:1032px;top:150px;width:22px;overflow:hidden;height:14px;line-height:14px;letter-spacing:0px">yes</div>
<div class="t" style="left:1057px;top:150px;width:27px;overflow:hidden;height:14px;line-height:14px;letter-spacing:0px">auto</div>
<div style="left:0;top:165px;width:1085px;height:14px;background:#b4defe"></div>
<div style="left:0;top:179px;width:1354px;height:1px;background:#d4d0c8"></div>
<div class="t" style="left:2px;top:165px;width:117px;overflow:hidden;height:14px;line-height:14px;letter-spacing:0px">Chevrolet Tahoe Or ...</div>
<div class="t" style="left:121px;top:165px;width:23px;height:14px;line-height:14px;text-align:right">7</div>
<div class="t" style="left:147px;top:165px;width:197px;overflow:hidden;height:14px;line-height:14px;letter-spacing:0px">SUV(Full Size) - Inclusive product</div>
<div class="t" style="left:347px;top:165px;width:72px;overflow:hidden;height:14px;line-height:14px;letter-spacing:0px">Flexible Car...</div>
<div class="t" style="left:422px;top:165px;width:32px;overflow:hidden;height:14px;line-height:14px;letter-spacing:0px">Sun</div>
<div class="t" style="left:457px;top:165px;width:67px;overflow:hidden;height:14px;line-height:14px;letter-spacing:0px">06/08/2017</div>
<div class="t" style="left:527px;top:165px;width:37px;overflow:hidden;height:14px;line-height:14px;letter-spacing:0px">10:00</div>
<div class="t" style="left:567px;top:165px;width:32px;overflow:hidden;height:14px;line-height:14px;letter-spacing:0px">Wed</div>
<div class="t" style="left:602px;top:165px;width:67px;overflow:hidden;height:14px;line-height:14px;letter-spacing:0px">16/08/2017</div>
<div class="t" style="left:672px;top:165px;width:37px;overflow:hidden;height:14px;line-height:14px;letter-spacing:0px">20:45</div>
<div class="t" style="left:711px;top:165px;width:23px;height:14px;line-height:14px;text-align:right">11</div>
<div class="t" style="left:737px;top:165px;width:47px;overflow:hidden;height:14px;line-height:14px;letter-spacing:0px">On Air...</div>
<div class="t" style="left:787px;top:165px;width:47px;overflow:hidden;height:14px;line-height:14px;letter-spacing:0px">On Air...</div>
<div class="t" style="left:836px;top:165px;width:53px;height:14px;line-height:14px;text-align:right">567.18</div>
<div class="t" style="left:891px;top:165px;width:63px;height:14px;line-height:14px;text-align:right">567.18</div>
<div class="t" style="left:957px;top:165px;width:72px;overflow:hidden;height:14px;line-height:14px;letter-spacing:0px">Alamo</div>
<div class="t" style="left:1032px;top:165px;width:22px;overflow:hidden;height:14px;line-height:14px;letter-spacing:0px">yes</div>
<div class="t" style="left:1057px;top:165px;width:27px;overflow:hidden;height:14px;line-height:14px;letter-spacing:0px">auto</div>
<div style="left:0;top:180px;width:1085px;height:14px;background:#b4defe"></div>
<div style="left:0;top:194px;width:1354px;height:1px;background:#d4d0c8"></div>
<div class="t" style="left:2px;top:180px;width:117px;overflow:hidden;height:14px;line-height:14px;letter-spacing:0px">Dodge Grand Carava...</div>
<div class="t" style="left:121px;top:180px;width:23px;height:14px;line-height:14px;text-align:right">7</div>
<div class="t" style="left:147px;top:180px;width:197px;overflow:hidden;height:14px;line-height:14px;letter-spacing:-0.19px">Van(Mini) - Inclusive GPS - Plus Exces...</div>
<div class="t" style="left:347px;top:180px;width:72px;overflow:hidden;height:14px;line-height:14px;letter-spacing:0px">Flexible Car...</div>
<div class="t" style="left:422px;top:180px;width:32px;overflow:hidden;height:14px;line-height:14px;letter-spacing:0px">Sun</div>
<div class="t" style="left:457px;top:180px;width:67px;overflow:hidden;height:14px;line-height:14px;letter-spacing:0px">06/08/2017</div>
<div class="t" style="left:527px;top:180px;width:37px;overflow:hidden;height:14px;line-height:14px;letter-spacing:0px">10:00</div>
<div class="t" style="left:567px;top:180px;width:32px;overflow:hidden;height:14px;line-height:14px;letter-spacing:0px">Wed</div>
<div class="t" style="left:602px;top:180px;width:67px;overflow:hidden;height:14px;line-height:14px;letter-spacing:0px">16/08/2017</div>
<div class="t" style="left:672px;top:180px;width:37px;overflow:hidden;height:14px;line-height:14px;letter-spacing:0px">20:45</div>
<div class="t" style="left:711px;top:180px;width:23px;height:14px;line-height:14px;text-align:right">11</div>
<div class="t" style="left:737px;top:180px;width:47px;overflow:hidden;height:14px;line-height:14px;letter-spacing:0px">On Air...</div>
<div class="t" style="left:787px;top:180px;width:47px;overflow:hidden;height:14px;line-height:14px;letter-spacing:0px">On Air...</div>
<div class="t" style="left:836px;top:180px;width:53px;height:14px;line-height:14px;text-align:right">576.32</div>
<div class="t" style="left:891px;top:180px;width:63px;height:14px;line-height:14px;text-align:right">576.32</div>
<div class="t" style="left:957px;top:180px;width:72px;overflow:hidden;height:14px;line-height:14px;letter-spacing:0px">Alamo</div>
<div class="t" style="left:1032px;top:180px;width:22px;overflow:hidden;height:14px;line-height:14px;letter-spacing:0px">yes</div>
<div class="t" style="left:1057px;top:180px;width:27px;overflow:hidden;height:14px;line-height:14px;letter-spacing:0px">auto</div>
<div style="left:0;top:195px;width:1085px;height:14px;background:#b4defe"></div>
<div style="left:0;top:209px;width:1354px;height:1px;background:#d4d0c8"></div>
<div class="t" style="left:2px;top:195px;width:117px;overflow:hidden;height:14px;line-height:14px;letter-spacing:0px">Dodge Grand Carava...</div>
<div class="t" style="left:121px;top:195px;width:23px;height:14px;line-height:14px;text-align:right">7</div>
<div class="t" style="left:147px;top:195px;width:197px;overflow:hidden;height:14px;line-height:14px;letter-spacing:-0.19px">Van(Mini) - Inclusive GPS - Plus Exces...</div>
<div class="t" style="left:347px;top:195px;width:72px;overflow:hidden;height:14px;line-height:14px;letter-spacing:0px">Flexible Car...</div>
<div class="t" style="left:422px;top:195px;width:32px;overflow:hidden;height:14px;line-height:14px;letter-spacing:0px">Sun</div>
<div class="t" style="left:457px;top:195px;width:67px;overflow:hidden;height:14px;line-height:14px;letter-spacing:0px">06/08/2017</div>
<div class="t" style="left:527px;top:195px;width:37px;overflow:hidden;height:14px;line-height:14px;letter-spacing:0px">10:00</div>
<div class="t" style="left:567px;top:195px;width:32px;overflow:hidden;height:14px;line-height:14px;letter-spacing:0px">Wed</div>
<div class="t" style="left:602px;top:195px;width:67px;overflow:hidden;height:14px;line-height:14px;letter-spacing:0px">16/08/2017</div>
<div class="t" style="left:672px;top:195px;width:37px;overflow:hidden;height:14px;line-height:14px;letter-spacing:0px">20:45</div>
<div class="t" style="left:711px;top:195px;width:23px;height:14px;line-height:14px;text-align:right">11</div>
<div class="t" style="left:737px;top:195px;width:47px;overflow:hidden;height:14px;line-height:14px;letter-spacing:0px">On Air...</div>
<div class="t" style="left:787px;top:195px;width:47px;overflow:hidden;height:14px;line-height:14px;letter-spacing:0px">On Air...</div>
<div class="t" style="left:836px;top:195px;width:53px;height:14px;line-height:14px;text-align:right">576.32</div>
<div class="t" style="left:891px;top:195px;width:63px;height:14px;line-height:14px;text-align:right">576.32</div>
<div class="t" style="left:957px;top:195px;width:72px;overflow:hidden;height:14px;line-height:14px;letter-spacing:0px">Alamo</div>
<div class="t" style="left:1032px;top:195px;width:22px;overflow:hidden;height:14px;line-height:14px;letter-spacing:0px">yes</div>
<div class="t" style="left:1057px;top:195px;width:27px;overflow:hidden;height:14px;line-height:14px;letter-spacing:0px">auto</div>
<div style="left:0;top:210px;width:1085px;height:14px;background:#b4defe"></div>
<div style="left:0;top:224px;width:1354px;height:1px;background:#d4d0c8"></div>
<div class="t" style="left:2px;top:210px;width:117px;overflow:hidden;height:14px;line-height:14px;letter-spacing:0px">Dodge Grand Carava...</div>
<div class="t" style="left:121px;top:210px;width:23px;height:14px;line-height:14px;text-align:right">7</div>
<div class="t" style="left:147px;top:210px;width:197px;overflow:hidden;height:14px;line-height:14px;letter-spacing:0px">Van(Mini) - Gold GPS</div>
<div class="t" style="left:347px;top:210px;width:72px;overflow:hidden;height:14px;line-height:14px;letter-spacing:0px">Flexible Car...</div>
<div class="t" style="left:422px;top:210px;width:32px;overflow:hidden;height:14px;line-height:14px;letter-spacing:0px">Sun</div>
<div class="t" style="left:457px;top:210px;width:67px;overflow:hidden;height:14px;line-height:14px;letter-spacing:0px">06/08/2017</div>
<div class="t" style="left:527px;top:210px;width:37px;overflow:hidden;height:14px;line-height:14px;letter-spacing:0px">10:00</div>
<div class="t" style="left:567px;top:210px;width:32px;overflow:hidden;height:14px;line-height:14px;letter-spacing:0px">Wed</div>
<div class="t" style="left:602px;top:210px;width:67px;overflow:hidden;height:14px;line-height:14px;letter-spacing:0px">16/08/2017</div>
<div class="t" style="left:672px;top:210px;width:37px;overflow:hidden;height:14px;line-height:14px;letter-spacing:0px">20:45</div>
<div class="t" style="left:711px;top:210px;width:23px;height:14px;line-height:14px;text-align:right">11</div>
<div class="t" style="left:737px;top:210px;width:47px;overflow:hidden;height:14px;line-height:14px;letter-spacing:0px">On Air...</div>
<div class="t" style="left:787px;top:210px;width:47px;overflow:hidden;height:14px;line-height:14px;letter-spacing:0px">On Air...</div>
<div class="t" style="left:836px;top:210px;width:53px;height:14px;line-height:14px;text-align:right">595.20</div>
<div class="t" style="left:891px;top:210px;width:63px;height:14px;line-height:14px;text-align:right">595.20</div>
<div class="t" style="left:957px;top:210px;width:72px;overflow:hidden;height:14px;line-height:14px;letter-spacing:0px">Alamo</div>
<div class="t" style="left:1032px;top:210px;width:22px;overflow:hidden;height:14px;line-height:14px;letter-spacing:0px">yes</div>
<div class="t" style="left:1057px;top:210px;width:27px;overflow:hidden;height:14px;line-height:14px;letter-spacing:0px">auto</div>
<div style="left:0;top:225px;width:1085px;height:14px;background:#b4defe"></div>
<div style="left:0;top:239px;width:1354px;height:1px;background:#d4d0c8"></div>
<div class="t" style="left:2px;top:225px;width:117px;overflow:hidden;height:14px;line-height:14px;letter-spacing:0px">Dodge Grand Carava...</div>
<div class="t" style="left:121px;top:225px;width:23px;height:14px;line-height:14px;text-align:right">7</div>
<div class="t" style="left:147px;top:225px;width:197px;overflow:hidden;height:14px;line-height:14px;letter-spacing:0px">Van(Mini) - Gold GPS</div>
<div class="t" style="left:347px;top:225px;width:72px;overflow:hidden;height:14px;line-height:14px;letter-spacing:0px">Flexible Car...</div>
<div class="t" style="left:422px;top:225px;width:32px;overflow:hidden;height:14px;line-height:14px;letter-spacing:0px">Sun</div>
<div class="t" style="left:457px;top:225px;width:67px;overflow:hidden;height:14px;line-height:14px;letter-spacing:0px">06/08/2017</div>
<div class="t" style="left:527px;top:225px;width:37px;overflow:hidden;height:14px;line-height:14px;letter-spacing:0px">10:00</div>
<div class="t" style="left:567px;top:225px;width:32px;overflow:hidden;height:14px;line-height:14px;letter-spacing:0px">Wed</div>
<div class="t" style="left:602px;top:225px;width:67px;overflow:hidden;height:14px;line-height:14px;letter-spacing:0px">16/08/2017</div>
<div class="t" style="left:672px;top:225px;width:37px;overflow:hidden;height:14px;line-height:14px;letter-spacing:0px">20:45</div>
<div class="t" style="left:711px;top:225px;width:23px;height:14px;line-height:14px;text-align:right">11</div>
<div class="t" style="left:737px;top:225px;width:47px;overflow:hidden;height:14px;line-height:14px;letter-spacing:0px">On Air...</div>
<div class="t" style="left:787px;top:225px;width:47px;overflow:hidden;height:14px;line-height:14px;letter-spacing:0px">On Air...</div>
<div class="t" style="left:836px;top:225px;width:53px;height:14px;line-height:14px;text-align:right">595.20</div>
<div class="t" style="left:891px;top:225px;width:63px;height:14px;line-height:14px;text-align:right">595.20</div>
<div class="t" style="left:957px;top:225px;width:72px;overflow:hidden;height:14px;line-height:14px;letter-spacing:0px">Alamo</div>
<div class="t" style="left:1032px;top:225px;width:22px;overflow:hidden;height:14px;line-height:14px;letter-spacing:0px">yes</div>
<div class="t" style="left:1057px;top:225px;width:27px;overflow:hidden;height:14px;line-height:14px;letter-spacing:0px">auto</div>
<div style="left:0;top:240px;width:1085px;height:14px;background:#b4defe"></div>
<div style="left:0;top:254px;width:1354px;height:1px;background:#d4d0c8"></div>
<div class="t" style="left:2px;top:240px;width:117px;overflow:hidden;height:14px;line-height:14px;letter-spacing:0px">Chevrolet Tahoe Or ...</div>
<div class="t" style="left:121px;top:240px;width:23px;height:14px;line-height:14px;text-align:right">7</div>
<div class="t" style="left:147px;top:240px;width:197px;overflow:hidden;height:14px;line-height:14px;letter-spacing:-0.2px">SUV(Full Size) - Inclusive product - Plu...</div>
<div class="t" style="left:347px;top:240px;width:72px;overflow:hidden;height:14px;line-height:14px;letter-spacing:0px">Flexible Car...</div>
<div class="t" style="left:422px;top:240px;width:32px;overflow:hidden;height:14px;line-height:14px;letter-spacing:0px">Sun</div>
<div class="t" style="left:457px;top:240px;width:67px;overflow:hidden;height:14px;line-height:14px;letter-spacing:0px">06/08/2017</div>
<div class="t" style="left:527px;top:240px;width:37px;overflow:hidden;height:14px;line-height:14px;letter-spacing:0px">10:00</div>
<div class="t" style="left:567px;top:240px;width:32px;overflow:hidden;height:14px;line-height:14px;letter-spacing:0px">Wed</div>
<div class="t" style="left:602px;top:240px;width:67px;overflow:hidden;height:14px;line-height:14px;letter-spacing:0px">16/08/2017</div>
<div class="t" style="left:672px;top:240px;width:37px;overflow:hidden;height:14px;line-height:14px;letter-spacing:0px">20:45</div>
<div class="t" style="left:711px;top:240px;width:23px;height:14px;line-height:14px;text-align:right">11</div>
<div class="t" style="left:737px;top:240px;width:47px;overflow:hidden;height:14px;line-height:14px;letter-spacing:0px">On Air...</div>
<div class="t" style="left:787px;top:240px;width:47px;overflow:hidden;height:14px;line-height:14px;letter-spacing:0px">On Air...</div>
<div class="t" style="left:836px;top:240px;width:53px;height:14px;line-height:14px;text-align:right">596.68</div>
<div class="t" style="left:891px;top:240px;width:63px;height:14px;line-height:14px;text-align:right">596.68</div>
<div class="t" style="left:957px;top:240px;width:72px;overflow:hidden;height:14px;line-height:14px;letter-spacing:0px">Alamo</div>
<div class="t" style="left:1032px;top:240px;width:22px;overflow:hidden;height:14px;line-height:14px;letter-spacing:0px">yes</div>
<div class="t" style="left:1057px;top:240px;width:27px;overflow:hidden;height:14px;line-height:14px;letter-spacing:0px">auto</div>
<div style="left:0;top:255px;width:1085px;height:14px;background:#b4defe"></div>
<div style="left:0;top:269px;width:1354px;height:1px;background:#d4d0c8"></div>
<div class="t" style="left:2px;top:255px;width:117px;overflow:hidden;height:14px;line-height:14px;letter-spacing:0px">Chevrolet Tahoe Or ...</div>
<div class="t" style="left:121px;top:255px;width:23px;height:14px;line-height:14px;text-align:right">7</div>
<div class="t" style="left:147px;top:255px;width:197px;overflow:hidden;height:14px;line-height:14px;letter-spacing:-0.2px">SUV(Full Size) - Inclusive product - Plu...</div>
<div class="t" style="left:347px;top:255px;width:72px;overflow:hidden;height:14px;line-height:14px;letter-spacing:0px">Flexible Car...</div>
<div class="t" style="left:422px;top:255px;width:32px;overflow:hidden;height:14px;line-height:14px;letter-spacing:0px">Sun</div>
<div class="t" style="left:457px;top:255px;width:67px;overflow:hidden;height:14px;line-height:14px;letter-spacing:0px">06/08/2017</div>
<div class="t" style="left:527px;top:255px;width:37px;overflow:hidden;height:14px;line-height:14px;letter-spacing:0px">10:00</div>
<div class="t" style="left:567px;top:255px;width:32px;overflow:hidden;height:14px;line-height:14px;letter-spacing:0px">Wed</div>
<div class="t" style="left:602px;top:255px;width:67px;overflow:hidden;height:14px;line-height:14px;letter-spacing:0px">16/08/2017</div>
<div class="t" style="left:672px;top:255px;width:37px;overflow:hidden;height:14px;line-height:14px;letter-spacing:0px">20:45</div>
<div class="t" style="left:711px;top:255px;width:23px;height:14px;line-height:14px;text-align:right">11</div>
<div class="t" style="left:737px;top:255px;width:47px;overflow:hidden;height:14px;line-height:14px;letter-spacing:0px">On Air...</div>
<div class="t" style="left:787px;top:255px;width:47px;overflow:hidden;height:14px;line-height:14px;letter-spacing:0px">On Air...</div>
<div class="t" style="left:836px;top:255px;width:53px;height:14px;line-height:14px;text-align:right">596.68</div>
<div class="t" style="left:891px;top:255px;width:63px;height:14px;line-height:14px;text-align:right">596.68</div>
<div class="t" style="left:957px;top:255px;width:72px;overflow:hidden;height:14px;line-height:14px;letter-spacing:0px">Alamo</div>
<div class="t" style="left:1032px;top:255px;width:22px;overflow:hidden;height:14px;line-height:14px;letter-spacing:0px">yes</div>
<div class="t" style="left:1057px;top:255px;width:27px;overflow:hidden;height:14px;line-height:14px;letter-spacing:0px">auto</div>
<div style="left:0;top:270px;width:1085px;height:14px;background:#b4defe"></div>
<div style="left:0;top:284px;width:1354px;height:1px;background:#d4d0c8"></div>
<div class="t" style="left:2px;top:270px;width:117px;overflow:hidden;height:14px;line-height:14px;letter-spacing:0px">Chevrolet Tahoe Or ...</div>
<div class="t" style="left:121px;top:270px;width:23px;height:14px;line-height:14px;text-align:right">7</div>
<div class="t" style="left:147px;top:270px;width:197px;overflow:hidden;height:14px;line-height:14px;letter-spacing:0px">SUV(Full Size) - Gold</div>
<div class="t" style="left:347px;top:270px;width:72px;overflow:hidden;height:14px;line-height:14px;letter-spacing:0px">Flexible Car...</div>
<div class="t" style="left:422px;top:270px;width:32px;overflow:hidden;height:14px;line-height:14px;letter-spacing:0px">Sun</div>
<div class="t" style="left:457px;top:270px;width:67px;overflow:hidden;height:14px;line-height:14px;letter-spacing:0px">06/08/2017</div>
<div class="t" style="left:527px;top:270px;width:37px;overflow:hidden;height:14px;line-height:14px;letter-spacing:0px">10:00</div>
<div class="t" style="left:567px;top:270px;width:32px;overflow:hidden;height:14px;line-height:14px;letter-spacing:0px">Wed</div>
<div class="t" style="left:602px;top:270px;width:67px;overflow:hidden;height:14px;line-height:14px;letter-spacing:0px">16/08/2017</div>
<div class="t" style="left:672px;top:270px;width:37px;overflow:hidden;height:14px;line-height:14px;letter-spacing:0px">20:45</div>
<div class="t" style="left:711px;top:270px;width:23px;height:14px;line-height:14px;text-align:right">11</div>
<div class="t" style="left:737px;top:270px;width:47px;overflow:hidden;height:14px;line-height:14px;letter-spacing:0px">On Air...</div>
<div class="t" style="left:787px;top:270px;width:47px;overflow:hidden;height:14px;line-height:14px;letter-spacing:0px">On Air...</div>
<div class="t" style="left:836px;top:270px;width:53px;height:14px;line-height:14px;text-align:right">606.23</div>
<div class="t" style="left:891px;top:270px;width:63px;height:14px;line-height:14px;text-align:right">606.23</div>
<div class="t" style="left:957px;top:270px;width:72px;overflow:hidden;height:14px;line-height:14px;letter-spacing:0px">Alamo</div>
<div class="t" style="left:1032px;top:270px;width:22px;overflow:hidden;height:14px;line-height:14px;letter-spacing:0px">yes</div>
<div class="t" style="left:1057px;top:270px;width:27px;overflow:hidden;height:14px;line-height:14px;letter-spacing:0px">auto</div>
<div style="left:0;top:285px;width:1085px;height:14px;background:#b4defe"></div>
<div style="left:0;top:299px;width:1354px;height:1px;background:#d4d0c8"></div>
<div class="t" style="left:2px;top:285px;width:117px;overflow:hidden;height:14px;line-height:14px;letter-spacing:0px">Chevrolet Tahoe Or ...</div>
<div class="t" style="left:121px;top:285px;width:23px;height:14px;line-height:14px;text-align:right">7</div>
<div class="t" style="left:147px;top:285px;width:197px;overflow:hidden;height:14px;line-height:14px;letter-spacing:0px">SUV(Full Size) - Gold</div>
<div class="t" style="left:347px;top:285px;width:72px;overflow:hidden;height:14px;line-height:14px;letter-spacing:0px">Flexible Car...</div>
<div class="t" style="left:422px;top:285px;width:32px;overflow:hidden;height:14px;line-height:14px;letter-spacing:0px">Sun</div>
<div class="t" style="left:457px;top:285px;width:67px;overflow:hidden;height:14px;line-height:14px;letter-spacing:0px">06/08/2017</div>
<div class="t" style="left:527px;top:285px;width:37px;overflow:hidden;height:14px;line-height:14px;letter-spacing:0px">10:00</div>
<div class="t" style="left:567px;top:285px;width:32px;overflow:hidden;height:14px;line-height:14px;letter-spacing:0px">Wed</div>
<div class="t" style="left:602px;top:285px;width:67px;overflow:hidden;height:14px;line-height:14px;letter-spacing:0px">16/08/2017</div>
<div class="t" style="left:672px;top:285px;width:37px;overflow:hidden;height:14px;line-height:14px;letter-spacing:0px">20:45</div>
<div class="t" style="left:711px;top:285px;width:23px;height:14px;line-height:14px;text-align:right">11</div>
<div class="t" style="left:737px;top:285px;width:47px;overflow:hidden;height:14px;line-height:14px;letter-spacing:0px">On Air...</div>
<div class="t" style="left:787px;top:285px;width:47px;overflow:hidden;height:14px;line-height:14px;letter-spacing:0px">On Air...</div>
<div class="t" style="left:836px;top:285px;width:53px;height:14px;line-height:14px;text-align:right">606.23</div>
<div class="t" style="left:891px;top:285px;width:63px;height:14px;line-height:14px;text-align:right">606.23</div>
<div class="t" style="left:957px;top:285px;width:72px;overflow:hidden;height:14px;line-height:14px;letter-spacing:0px">Alamo</div>
<div class="t" style="left:1032px;top:285px;width:22px;overflow:hidden;height:14px;line-height:14px;letter-spacing:0px">yes</div>
<div class="t" style="left:1057px;top:285px;width:27px;overflow:hidden;height:14px;line-height:14px;letter-spacing:0px">auto</div>
<div style="left:0;top:300px;width:1085px;height:14px;background:#b4defe"></div>
<div style="left:0;top:314px;width:1354px;height:1px;background:#d4d0c8"></div>
<div class="t" style="left:2px;top:300px;width:117px;overflow:hidden;height:14px;line-height:14px;letter-spacing:0px">Dodge Grand Carava...</div>
<div class="t" style="left:121px;top:300px;width:23px;height:14px;line-height:14px;text-align:right">7</div>
<div class="t" style="left:147px;top:300px;width:197px;overflow:hidden;height:14px;line-height:14px;letter-spacing:-0.33px">Van(Mini) - Gold GPS - Plus Excess Ref...</div>
<div class="t" style="left:347px;top:300px;width:72px;overflow:hidden;height:14px;line-height:14px;letter-spacing:0px">Flexible Car...</div>
<div class="t" style="left:422px;top:300px;width:32px;overflow:hidden;height:14px;line-height:14px;letter-spacing:0px">Sun</div>
<div class="t" style="left:457px;top:300px;width:67px;overflow:hidden;height:14px;line-height:14px;letter-spacing:0px">06/08/2017</div>
<div class="t" style="left:527px;top:300px;width:37px;overflow:hidden;height:14px;line-height:14px;letter-spacing:0px">10:00</div>
<div class="t" style="left:567px;top:300px;width:32px;overflow:hidden;height:14px;line-height:14px;letter-spacing:0px">Wed</div>
<div class="t" style="left:602px;top:300px;width:67px;overflow:hidden;height:14px;line-height:14px;letter-spacing:0px">16/08/2017</div>
<div class="t" style="left:672px;top:300px;width:37px;overflow:hidden;height:14px;line-height:14px;letter-spacing:0px">20:45</div>
<div class="t" style="left:711px;top:300px;width:23px;height:14px;line-height:14px;text-align:right">11</div>
<div class="t" style="left:737px;top:300px;width:47px;overflow:hidden;height:14px;line-height:14px;letter-spacing:0px">On Air...</div>
<div class="t" style="left:787px;top:300px;width:47px;overflow:hidden;height:14px;line-height:14px;letter-spacing:0px">On Air...</div>
<div class="t" style="left:836px;top:300px;width:53px;height:14px;line-height:14px;text-align:right">624.70</div>
<div class="t" style="left:891px;top:300px;width:63px;height:14px;line-height:14px;text-align:right">624.70</div>
<div class="t" style="left:957px;top:300px;width:72px;overflow:hidden;height:14px;line-height:14px;letter-spacing:0px">Alamo</div>
<div class="t" style="left:1032px;top:300px;width:22px;overflow:hidden;height:14px;line-height:14px;letter-spacing:0px">yes</div>
<div class="t" style="left:1057px;top:300px;width:27px;overflow:hidden;height:14px;line-height:14px;letter-spacing:0px">auto</div>
<div style="left:0;top:315px;width:1085px;height:14px;background:#b4defe"></div>
<div style="left:0;top:329px;width:1354px;height:1px;background:#d4d0c8"></div>
<div class="t" style="left:2px;top:315px;width:117px;overflow:hidden;height:14px;line-height:14px;letter-spacing:0px">Dodge Grand Carava...</div>
<div class="t" style="left:121px;top:315px;width:23px;height:14px;line-height:14px;text-align:right">7</div>
<div class="t" style="left:147px;top:315px;width:197px;overflow:hidden;height:14px;line-height:14px;letter-spacing:-0.33px">Van(Mini) - Gold GPS - Plus Excess Ref...</div>
<div class="t" style="left:347px;top:315px;width:72px;overflow:hidden;height:14px;line-height:14px;letter-spacing:0px">Flexible Car...</div>
<div class="t" style="left:422px;top:315px;width:32px;overflow:hidden;height:14px;line-height:14px;letter-spacing:0px">Sun</div>
<div class="t" style="left:457px;top:315px;width:67px;overflow:hidden;height:14px;line-height:14px;letter-spacing:0px">06/08/2017</div>
<div class="t" style="left:527px;top:315px;width:37px;overflow:hidden;height:14px;line-height:14px;letter-spacing:0px">10:00</div>
<div class="t" style="left:567px;top:315px;width:32px;overflow:hidden;height:14px;line-height:14px;letter-spacing:0px">Wed</div>
<div class="t" style="left:602px;top:315px;width:67px;overflow:hidden;height:14px;line-height:14px;letter-spacing:0px">16/08/2017</div>
<div class="t" style="left:672px;top:315px;width:37px;overflow:hidden;height:14px;line-height:14px;letter-spacing:0px">20:45</div>
<div class="t" style="left:711px;top:315px;width:23px;height:14px;line-height:14px;text-align:right">11</div>
<div class="t" style="left:737px;top:315px;width:47px;overflow:hidden;height:14px;line-height:14px;letter-spacing:0px">On Air...</div>
<div class="t" style="left:787px;top:315px;width:47px;overflow:hidden;height:14px;line-height:14px;letter-spacing:0px">On Air...</div>
<div class="t" style="left:836px;top:315px;width:53px;height:14px;line-height:14px;text-align:right">624.70</div>
<div class="t" style="left:891px;top:315px;width:63px;height:14px;line-height:14px;text-align:right">624.70</div>
<div class="t" style="left:957px;top:315px;width:72px;overflow:hidden;height:14px;line-height:14px;letter-spacing:0px">Alamo</div>
<div class="t" style="left:1032px;top:315px;width:22px;overflow:hidden;height:14px;line-height:14px;letter-spacing:0px">yes</div>
<div class="t" style="left:1057px;top:315px;width:27px;overflow:hidden;height:14px;line-height:14px;letter-spacing:0px">auto</div>
<div style="left:0;top:330px;width:1085px;height:14px;background:#b4defe"></div>
<div style="left:0;top:344px;width:1354px;height:1px;background:#d4d0c8"></div>
<div class="t" style="left:2px;top:330px;width:117px;overflow:hidden;height:14px;line-height:14px;letter-spacing:0px">Chevrolet Tahoe Or ...</div>
<div class="t" style="left:121px;top:330px;width:23px;height:14px;line-height:14px;text-align:right">7</div>
<div class="t" style="left:147px;top:330px;width:197px;overflow:hidden;height:14px;line-height:14px;letter-spacing:-0.32px">SUV(Full Size) - Gold - Plus Excess Ref...</div>
<div class="t" style="left:347px;top:330px;width:72px;overflow:hidden;height:14px;line-height:14px;letter-spacing:0px">Flexible Car...</div>
<div class="t" style="left:422px;top:330px;width:32px;overflow:hidden;height:14px;line-height:14px;letter-spacing:0px">Sun</div>
<div class="t" style="left:457px;top:330px;width:67px;overflow:hidden;height:14px;line-height:14px;letter-spacing:0px">06/08/2017</div>
<div class="t" style="left:527px;top:330px;width:37px;overflow:hidden;height:14px;line-height:14px;letter-spacing:0px">10:00</div>
<div class="t" style="left:567px;top:330px;width:32px;overflow:hidden;height:14px;line-height:14px;letter-spacing:0px">Wed</div>
<div class="t" style="left:602px;top:330px;width:67px;overflow:hidden;height:14px;line-height:14px;letter-spacing:0px">16/08/2017</div>
<div class="t" style="left:672px;top:330px;width:37px;overflow:hidden;height:14px;line-height:14px;letter-spacing:0px">20:45</div>
<div class="t" style="left:711px;top:330px;width:23px;height:14px;line-height:14px;text-align:right">11</div>
<div class="t" style="left:737px;top:330px;width:47px;overflow:hidden;height:14px;line-height:14px;letter-spacing:0px">On Air...</div>
<div class="t" style="left:787px;top:330px;width:47px;overflow:hidden;height:14px;line-height:14px;letter-spacing:0px">On Air...</div>
<div class="t" style="left:836px;top:330px;width:53px;height:14px;line-height:14px;text-align:right">635.74</div>
<div class="t" style="left:891px;top:330px;width:63px;height:14px;line-height:14px;text-align:right">635.74</div>
<div class="t" style="left:957px;top:330px;width:72px;overflow:hidden;height:14px;line-height:14px;letter-spacing:0px">Alamo</div>
<div class="t" style="left:1032px;top:330px;width:22px;overflow:hidden;height:14px;line-height:14px;letter-spacing:0px">yes</div>
<div class="t" style="left:1057px;top:330px;width:27px;overflow:hidden;height:14px;line-height:14px;letter-spacing:0px">auto</div>
<div style="left:0;top:345px;width:1085px;height:14px;background:#b4defe"></div>
<div style="left:0;top:359px;width:1354px;height:1px;background:#d4d0c8"></div>
<div class="t" style="left:2px;top:345px;width:117px;overflow:hidden;height:14px;line-height:14px;letter-spacing:0px">Chevrolet Tahoe Or ...</div>
<div class="t" style="left:121px;top:345px;width:23px;height:14px;line-height:14px;text-align:right">7</div>
<div class="t" style="left:147px;top:345px;width:197px;overflow:hidden;height:14px;line-height:14px;letter-spacing:-0.32px">SUV(Full Size) - Gold - Plus Excess Ref...</div>
<div class="t" style="left:347px;top:345px;width:72px;overflow:hidden;height:14px;line-height:14px;letter-spacing:0px">Flexible Car...</div>
<div class="t" style="left:422px;top:345px;width:32px;overflow:hidden;height:14px;line-height:14px;letter-spacing:0px">Sun</div>
<div class="t" style="left:457px;top:345px;width:67px;overflow:hidden;height:14px;line-height:14px;letter-spacing:0px">06/08/2017</div>
<div class="t" style="left:527px;top:345px;width:37px;overflow:hidden;height:14px;line-height:14px;letter-spacing:0px">10:00</div>
<div class="t" style="left:567px;top:345px;width:32px;overflow:hidden;height:14px;line-height:14px;letter-spacing:0px">Wed</div>
<div class="t" style="left:602px;top:345px;width:67px;overflow:hidden;height:14px;line-height:14px;letter-spacing:0px">16/08/2017</div>
<div class="t" style="left:672px;top:345px;width:37px;overflow:hidden;height:14px;line-height:14px;letter-spacing:0px">20:45</div>
<div class="t" style="left:711px;top:345px;width:23px;height:14px;line-height:14px;text-align:right">11</div>
<div class="t" style="left:737px;top:345px;width:47px;overflow:hidden;height:14px;line-height:14px;letter-spacing:0px">On Air...</div>
<div class="t" style="left:787px;top:345px;width:47px;overflow:hidden;height:14px;line-height:14px;letter-spacing:0px">On Air...</div>
<div class="t" style="left:836px;top:345px;width:53px;height:14px;line-height:14px;text-align:right">635.74</div>
<div class="t" style="left:891px;top:345px;width:63px;height:14px;line-height:14px;text-align:right">635.74</div>
<div class="t" style="left:957px;top:345px;width:72px;overflow:hidden;height:14px;line-height:14px;letter-spacing:0px">Alamo</div>
<div class="t" style="left:1032px;top:345px;width:22px;overflow:hidden;height:14px;line-height:14px;letter-spacing:0px">yes</div>
<div class="t" style="left:1057px;top:345px;width:27px;overflow:hidden;height:14px;line-height:14px;letter-spacing:0px">auto</div>
<div style="left:0;top:360px;width:1085px;height:14px;background:#b4defe"></div>
<div style="left:0;top:374px;width:1354px;height:1px;background:#d4d0c8"></div>
<div class="t" style="left:2px;top:360px;width:117px;overflow:hidden;height:14px;line-height:14px;letter-spacing:0px">Chevrolet Tahoe Or ...</div>
<div class="t" style="left:121px;top:360px;width:23px;height:14px;line-height:14px;text-align:right">7</div>
<div class="t" style="left:147px;top:360px;width:197px;overflow:hidden;height:14px;line-height:14px;letter-spacing:0px">SUV(Full Size) - Inclusive GPS</div>
<div class="t" style="left:347px;top:360px;width:72px;overflow:hidden;height:14px;line-height:14px;letter-spacing:0px">Flexible Car...</div>
<div class="t" style="left:422px;top:360px;width:32px;overflow:hidden;height:14px;line-height:14px;letter-spacing:0px">Sun</div>
<div class="t" style="left:457px;top:360px;width:67px;overflow:hidden;height:14px;line-height:14px;letter-spacing:0px">06/08/2017</div>
<div class="t" style="left:527px;top:360px;width:37px;overflow:hidden;height:14px;line-height:14px;letter-spacing:0px">10:00</div>
<div class="t" style="left:567px;top:360px;width:32px;overflow:hidden;height:14px;line-height:14px;letter-spacing:0px">Wed</div>
<div class="t" style="left:602px;top:360px;width:67px;overflow:hidden;height:14px;line-height:14px;letter-spacing:0px">16/08/2017</div>
<div class="t" style="left:672px;top:360px;width:37px;overflow:hidden;height:14px;line-height:14px;letter-spacing:0px">20:45</div>
<div class="t" style="left:711px;top:360px;width:23px;height:14px;line-height:14px;text-align:right">11</div>
<div class="t" style="left:737px;top:360px;width:47px;overflow:hidden;height:14px;line-height:14px;letter-spacing:0px">On Air...</div>
<div class="t" style="left:787px;top:360px;width:47px;overflow:hidden;height:14px;line-height:14px;letter-spacing:0px">On Air...</div>
<div class="t" style="left:836px;top:360px;width:53px;height:14px;line-height:14px;text-align:right">644.11</div>
<div class="t" style="left:891px;top:360px;width:63px;height:14px;line-height:14px;text-align:right">644.11</div>
<div class="t" style="left:957px;top:360px;width:72px;overflow:hidden;height:14px;line-height:14px;letter-spacing:0px">Alamo</div>
<div class="t" style="left:1032px;top:360px;width:22px;overflow:hidden;height:14px;line-height:14px;letter-spacing:0px">yes</div>
<div class="t" style="left:1057px;top:360px;width:27px;overflow:hidden;height:14px;line-height:14px;letter-spacing:0px">auto</div>
<div style="left:120px;top:0;width:1px;height:365px;background:#d4d0c8"></div>
<div style="left:145px;top:0;width:1px;height:365px;background:#d4d0c8"></div>
<div style="left:345px;top:0;width:1px;height:365px;background:#d4d0c8"></div>
<div style="left:420px;top:0;width:1px;height:365px;background:#d4d0c8"></div>
<div style="left:455px;top:0;width:1px;height:365px;background:#d4d0c8"></div>
<div style="left:525px;top:0;width:1px;height:365px;background:#d4d0c8"></div>
<div style="left:565px;top:0;width:1px;height:365px;background:#d4d0c8"></div>
<div style="left:600px;top:0;width:1px;height:365px;background:#d4d0c8"></div>
<div style="left:670px;top:0;width:1px;height:365px;background:#d4d0c8"></div>
<div style="left:710px;top:0;width:1px;height:365px;background:#d4d0c8"></div>
<div style="left:735px;top:0;width:1px;height:365px;background:#d4d0c8"></div>
<div style="left:785px;top:0;width:1px;height:365px;background:#d4d0c8"></div>
<div style="left:835px;top:0;width:1px;height:365px;background:#d4d0c8"></div>
<div style="left:890px;top:0;width:1px;height:365px;background:#d4d0c8"></div>
<div style="left:955px;top:0;width:1px;height:365px;background:#d4d0c8"></div>
<div style="left:1030px;top:0;width:1px;height:365px;background:#d4d0c8"></div>
<div style="left:1055px;top:0;width:1px;height:365px;background:#d4d0c8"></div>
<div style="left:1085px;top:0;width:1px;height:365px;background:#d4d0c8"></div>
</div>
<div style="left:19px;top:368px;width:1px;height:365px;background:#fff"></div>
<div style="left:1372px;top:349px;width:9px;height:384px;background:#fff"></div>
<div style="left:1373px;top:349px;width:8px;height:384px;background-color:#e8e6e2;background-image:repeating-conic-gradient(#fff 0 25%, #d4d0c8 0 50%);background-size:2px 2px"></div>
<div style="left:1373px;top:349px;width:10px;height:16px;background:#d4d0c8;border-top:1px solid #d4d0c8;border-left:1px solid #d4d0c8;border-bottom:1px solid #404040;box-shadow:inset 1px 1px 0 #fff, inset 0 -1px 0 #808080"></div>
<svg style="left:1376px;top:353px" width="7" height="5" viewBox="0 0 7 5"><polygon points="0.5,4.5 8.5,4.5 4.5,0.5" fill="#000"/></svg>
<div style="left:1373px;top:365px;width:10px;height:144px;background:#d4d0c8;border-top:1px solid #d4d0c8;border-left:1px solid #d4d0c8;border-bottom:1px solid #404040;box-shadow:inset 1px 1px 0 #fff, inset 0 -1px 0 #808080"></div>
<div style="left:1373px;top:717px;width:10px;height:16px;background:#d4d0c8;border-top:1px solid #d4d0c8;border-left:1px solid #d4d0c8;border-bottom:1px solid #404040;box-shadow:inset 1px 1px 0 #fff, inset 0 -1px 0 #808080"></div>
<svg style="left:1376px;top:722px" width="7" height="5" viewBox="0 0 7 5"><polygon points="0.5,0.5 8.5,0.5 4.5,4.5" fill="#000"/></svg>
<div class="t" style="left:22px;top:759px;height:14px;line-height:14px;">First portion: 16.9 sec, total search time: 17.1 sec</div>
<div style="left:1360px;top:755px;width:30px;height:22px;background:#d4d0c8;border-top:1px solid #fff;border-left:1px solid #fff;border-bottom:1px solid #404040;box-shadow:inset 0 -1px 0 #808080"></div>
<div class="t" style="left:1368px;top:757px;height:16px;line-height:16px;font-family:'Liberation Serif',serif;font-weight:bold;font-size:15px;color:#0050b0">i</div>
<div style="left:15px;top:782px;width:1366px;height:1px;background:#808080"></div>
<div style="left:15px;top:783px;width:52px;height:17px;background:#d4d0c8;"></div>
<div style="left:67px;top:783px;width:1px;height:17px;background:#808080"></div>
<div class="t" style="left:18px;top:784px;height:14px;line-height:14px;color:#000;letter-spacing:-0.5px">Summary</div>
<div style="left:68px;top:783px;width:40px;height:17px;background:#d4d0c8;"></div>
<div style="left:108px;top:783px;width:1px;height:17px;background:#808080"></div>
<div class="t" style="left:71px;top:784px;height:14px;line-height:14px;color:#000;letter-spacing:-0.6px">Search</div>
<div style="left:109px;top:783px;width:79px;height:17px;background:#ccffcc;"></div>
<div style="left:188px;top:783px;width:1px;height:17px;background:#808080"></div>
<div class="t" style="left:112px;top:784px;height:14px;line-height:14px;color:#000;letter-spacing:-0.3px">Acc 5A,1C MIA</div>
<div style="left:189px;top:783px;width:64px;height:17px;background:#008000;border-radius:0 0 3px 3px;"></div>
<div style="left:253px;top:783px;width:1px;height:17px;background:#808080"></div>
<div class="t" style="left:192px;top:784px;height:14px;line-height:14px;color:#fff;letter-spacing:-0.45px">Car MIA FLL</div>
<div style="left:254px;top:783px;width:62px;height:17px;background:#ccffcc;"></div>
<div style="left:316px;top:783px;width:1px;height:17px;background:#808080"></div>
<div class="t" style="left:257px;top:784px;height:14px;line-height:14px;color:#000;letter-spacing:-0.3px">Tour 5A,1C</div>
<div style="left:317px;top:783px;width:95px;height:17px;background:#d4d0c8;"></div>
<div style="left:412px;top:783px;width:1px;height:17px;background:#808080"></div>
<div class="t" style="left:320px;top:784px;height:14px;line-height:14px;color:#000;letter-spacing:-0.35px">Financial Summary</div>
<div class="t" style="left:565px;top:808px;height:14px;line-height:14px;letter-spacing:-0.15px">User: 270 - Danielle Charman</div>
<div class="t" style="left:716px;top:808px;height:14px;line-height:14px;letter-spacing:-0.1px">Retailer: 'Ocean-Florida'</div>
<div class="t" style="left:842px;top:808px;height:14px;line-height:14px;">Client: none</div>
<div class="t" style="left:1340px;top:808px;height:14px;line-height:14px;">16:07 GMT</div>
<div style="left:0px;top:835px;width:1381px;height:1px;background:#808080"></div>
<div style="left:0px;top:836px;width:1381px;height:1px;background:#404040"></div>
<div style="left:0px;top:837px;width:1381px;height:38px;background:#d4d0c8"></div>
<div style="left:0px;top:838px;width:22px;height:36px;background:#fff;border-right:1px solid #d4d0c8;border-bottom:1px solid #d4d0c8"></div>
<div class="t" style="left:-2px;top:850px;height:14px;line-height:14px;font-weight:bold">a...</div>
<div style="left:1208px;top:838px;width:1px;height:36px;background:#808080"></div>
<div style="left:1209px;top:838px;width:1px;height:36px;background:#e8e6e2"></div>
<svg style="left:1210px;top:842px" width="100" height="28" viewBox="0 0 100 28"><polygon points="6,6.5 12,6.5 12.5,14 5.5,14" fill="#f0a020"/><polygon points="6,6.5 12,6.5 12,9 6,9" fill="#f8c030"/><polygon points="12,7 21,7 21,13 12.5,14" fill="#1e88d0"/><polygon points="5,14 12.5,14 13.5,21.5 5,21" fill="#40a040"/><polygon points="12.5,13.5 21,13 20.5,22 13.5,22" fill="#e02818"/><polygon points="17,13 21,13 20.5,18 17,18" fill="#f06010"/><rect x="29.5" y="10.5" width="13" height="6" fill="#58d040" stroke="#107010"/><rect x="31" y="12" width="5" height="3" fill="#a0f080"/><rect x="39" y="11" width="2" height="2" fill="#000"/><rect x="33" y="17" width="6" height="1.5" fill="#e8d000"/><path d="M42.5 9.5 H45 M43 9.5 V17.5 M43 12 H45 M43 15 H45" stroke="#000" stroke-width="1.2" fill="none"/><rect x="58.5" y="8.5" width="10" height="11" fill="#fff" stroke="#707070"/><rect x="60" y="10" width="7" height="7" fill="#b8b8c0"/><rect x="60" y="20" width="8" height="1.5" fill="#909090"/><path d="M56 6.5 V11 Q56 13 57.5 13 Q59 13 59 11 V6.5" stroke="#606060" stroke-width="1.3" fill="#fff"/><path d="M57.5 13 V22" stroke="#505050" stroke-width="1.3"/><polygon points="77.5,10.5 80,10.5 84,7 84,21 80,18 77.5,18" fill="#f4f4f4" stroke="#909090"/><circle cx="88" cy="17" r="4.3" fill="#e01818"/><path d="M86 15 L90 19 M90 15 L86 19" stroke="#fff" stroke-width="1.5"/></svg>
<div class="t" style="left:1331px;top:841px;height:14px;line-height:14px;">16:07</div>
<div class="t" style="left:1316px;top:857px;height:14px;line-height:14px;letter-spacing:0.1px">26/08/2016</div>
<div style="left:1376px;top:850px;width:5px;height:12px;background:#a0b8d8"></div>
</body></html>
